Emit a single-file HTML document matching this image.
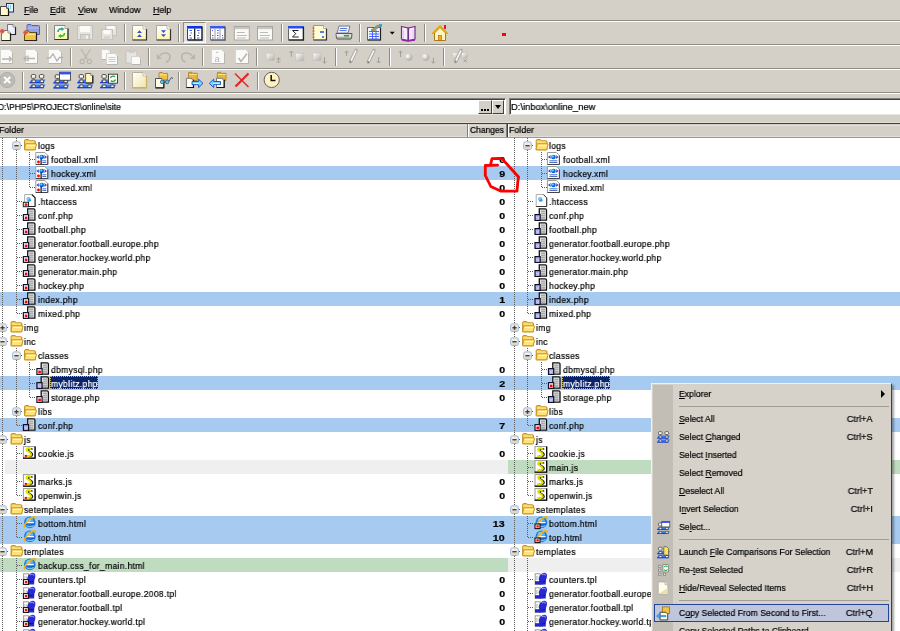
<!DOCTYPE html>
<html><head><meta charset="utf-8"><style>
html,body{margin:0;padding:0;width:900px;height:631px;overflow:hidden;background:#D4D0C8;position:relative;font-family:"Liberation Sans", sans-serif}
.t{position:absolute;white-space:nowrap;line-height:14px;transform-origin:left top;font-family:"Liberation Sans", sans-serif;will-change:transform;-webkit-text-stroke:0.22px currentColor}
u{text-decoration:underline}
svg{overflow:visible}
</style></head><body>
<svg width="0" height="0" style="position:absolute"><defs><symbol id="folder" viewBox="0 0 14 14" overflow="visible"><path d="M2.8 11.8 V2.6 Q2.8 1.6 3.8 1.6 H6.6 Q7.2 1.6 7.6 2.2 L8 2.8 H12.6 Q13.6 2.8 13.6 3.8 V11.8 Z" fill="#F4C848" stroke="#C08A1C" stroke-width="1"/>
<path d="M3.4 4 H12.4" stroke="#FFF0B0" stroke-width="1"/>
<path d="M4.2 5.8 H14.2 Q14.9 5.8 14.7 6.5 L13.3 11.3 Q13.1 11.8 12.5 11.8 H3.2 Q2.6 11.8 2.8 11.2 L3.6 6.4 Q3.7 5.8 4.2 5.8 Z" fill="#FFE27A" stroke="#C8961E" stroke-width="1"/>
<path d="M4.8 7.4 H13.2" stroke="#FFF6C8" stroke-width="1.2"/></symbol><symbol id="minus" viewBox="0 0 9 9" overflow="visible"><rect x="0.5" y="0.5" width="7.6" height="7.6" rx="1.6" fill="#F0EEE6" stroke="#98B2D4"/><rect x="1" y="5" width="6.6" height="2.6" fill="#DCD8CC"/><rect x="2.2" y="3.6" width="4.2" height="1.4" fill="#404040"/></symbol><symbol id="plus" viewBox="0 0 9 9" overflow="visible"><rect x="0.5" y="0.5" width="7.6" height="7.6" rx="1.6" fill="#F0EEE6" stroke="#98B2D4"/><rect x="1" y="5" width="6.6" height="2.6" fill="#DCD8CC"/><rect x="2.2" y="3.6" width="4.2" height="1.4" fill="#404040"/><rect x="3.6" y="2.2" width="1.4" height="4.2" fill="#404040"/></symbol><symbol id="xmlL" viewBox="0 0 14 14" overflow="visible"><path d="M0.5 0.5 H9.5 L12.5 3.5 V12.5 H0.5 Z" fill="#fff" stroke="#9A9A9A"/><path d="M12.5 3.5 V12.5 H0.5" fill="none" stroke="#444"/>
<path d="M3.8 3.6 L2 4.9 L3.8 6.2 M9 3.6 L10.8 4.9 L9 6.2" fill="none" stroke="#2A40E0" stroke-width="1.1"/>
<circle cx="6.5" cy="5" r="2.3" fill="#1060E0"/><circle cx="6" cy="4.4" r="1.1" fill="#40E0E8"/>
<rect x="5.2" y="6.5" width="1.2" height="6" fill="#111"/>
<rect x="7" y="8.3" width="4" height="1" fill="#5070C0"/><rect x="7" y="10" width="4" height="1" fill="#5070C0"/>
<circle cx="3.2" cy="10" r="1.4" fill="#F00"/></symbol><symbol id="xmlR" viewBox="0 0 14 14" overflow="visible"><path d="M0.5 0.5 H9.5 L12.5 3.5 V12.5 H0.5 Z" fill="#fff" stroke="#9A9A9A"/><path d="M12.5 3.5 V12.5 H0.5" fill="none" stroke="#444"/>
<path d="M3.8 3.6 L2 4.9 L3.8 6.2 M9 3.6 L10.8 4.9 L9 6.2" fill="none" stroke="#2A40E0" stroke-width="1.1"/>
<circle cx="6.5" cy="5" r="2.3" fill="#1060E0"/><circle cx="6" cy="4.4" r="1.1" fill="#40E0E8"/>
<rect x="2.5" y="8.3" width="8" height="1" fill="#5070C0"/><rect x="2.5" y="10" width="8" height="1" fill="#5070C0"/></symbol><symbol id="htL" viewBox="0 0 14 14" overflow="visible"><path d="M2.8 0.5 H10 L13.3 3.8 V12.5 H2.8 Z" fill="#fff" stroke="#B0B0B0"/><path d="M10 0.5 L13.3 3.8 V12.5 H7" fill="none" stroke="#222" stroke-width="1.1"/>
<path d="M4.5 4.5 Q6 2 8 3.5 L9.5 6.5 Q8 8.5 6 7.5 Z" fill="#3C9CE8"/><circle cx="6.2" cy="4.5" r="1.3" fill="#8FD0FF"/>
<rect x="1.5" y="8.3" width="5.2" height="4.4" fill="#E8F4F0" stroke="#222" stroke-width="1"/><rect x="3" y="9.4" width="2.6" height="2.4" fill="#F00"/></symbol><symbol id="htR" viewBox="0 0 14 14" overflow="visible"><path d="M2.8 0.5 H10 L13.3 3.8 V12.5 H2.8 Z" fill="#fff" stroke="#B0B0B0"/><path d="M10 0.5 L13.3 3.8 V12.5 H2.8" fill="none" stroke="#333" stroke-width="1"/>
<path d="M4.5 4.5 Q6 2 8 3.5 L9.5 6.5 Q8 8.5 6 7.5 Z" fill="#3C9CE8"/><circle cx="6.2" cy="4.5" r="1.3" fill="#8FD0FF"/></symbol><symbol id="phpL" viewBox="0 0 14 14" overflow="visible"><path d="M5.9 0.8 H11.8 Q13.1 0.8 13.1 2.1 V12.2 H5.9 Z" fill="#F6F6F6" stroke="#111" stroke-width="1.3"/>
<rect x="7.3" y="2.6" width="4.4" height="1.1" fill="#8A8A8A"/><rect x="7.3" y="4.6" width="4.4" height="1.1" fill="#8A8A8A"/><rect x="7.3" y="6.6" width="4.4" height="1.1" fill="#8A8A8A"/><rect x="7.3" y="8.6" width="4.4" height="1.1" fill="#8A8A8A"/><rect x="7.3" y="10.4" width="4.4" height="1" fill="#8A8A8A"/><rect x="1.6" y="6.6" width="5.2" height="5.8" fill="#F4F8F8" stroke="#101830" stroke-width="1.2"/><rect x="3" y="8.6" width="2.6" height="2.6" fill="#F00"/></symbol><symbol id="phpR" viewBox="0 0 14 14" overflow="visible"><path d="M5.9 0.8 H11.8 Q13.1 0.8 13.1 2.1 V12.2 H5.9 Z" fill="#F6F6F6" stroke="#111" stroke-width="1.3"/>
<rect x="7.3" y="2.6" width="4.4" height="1.1" fill="#8A8A8A"/><rect x="7.3" y="4.6" width="4.4" height="1.1" fill="#8A8A8A"/><rect x="7.3" y="6.6" width="4.4" height="1.1" fill="#8A8A8A"/><rect x="7.3" y="8.6" width="4.4" height="1.1" fill="#8A8A8A"/><rect x="7.3" y="10.4" width="4.4" height="1" fill="#8A8A8A"/><rect x="1.6" y="6.6" width="5.2" height="5.8" fill="#A8ACF0" stroke="#101020" stroke-width="1.2"/><path d="M3 8.5 L4 10.5 L3 12 M5.5 8.5 L4.5 10.5 L5.5 12" stroke="#E0E4FF" stroke-width="0.6" fill="none"/></symbol><symbol id="jsL" viewBox="0 0 14 14" overflow="visible"><rect x="1.6" y="0.6" width="11.6" height="11.8" fill="#fff" stroke="#9A9A9A" stroke-width="1"/><path d="M1.2 12.2 H13.3 V0.4" fill="none" stroke="#000" stroke-width="1.3"/>
<path d="M10.8 3.4 C 9.8 2.2, 6.6 2.2, 6.6 4.1 C 6.6 6, 10.8 5.9, 10.8 8.4 C 10.8 10.8, 7 11, 5.8 9.8" fill="none" stroke="#1A1A1A" stroke-width="1.3"/>
<path d="M9 3 C 8 1.8, 4.6 1.8, 4.6 3.8 C 4.6 5.8, 9 5.6, 9 8.2 C 9 10.6, 5 10.8, 3.8 9.6" fill="none" stroke="#E0E000" stroke-width="1.9"/><rect x="2.9" y="8.9" width="2.2" height="2" fill="#F00"/></symbol><symbol id="jsR" viewBox="0 0 14 14" overflow="visible"><rect x="1.6" y="0.6" width="11.6" height="11.8" fill="#fff" stroke="#9A9A9A" stroke-width="1"/><path d="M1.2 12.2 H13.3 V0.4" fill="none" stroke="#000" stroke-width="1.3"/>
<path d="M10.8 3.4 C 9.8 2.2, 6.6 2.2, 6.6 4.1 C 6.6 6, 10.8 5.9, 10.8 8.4 C 10.8 10.8, 7 11, 5.8 9.8" fill="none" stroke="#1A1A1A" stroke-width="1.3"/>
<path d="M9 3 C 8 1.8, 4.6 1.8, 4.6 3.8 C 4.6 5.8, 9 5.6, 9 8.2 C 9 10.6, 5 10.8, 3.8 9.6" fill="none" stroke="#E0E000" stroke-width="1.9"/></symbol><symbol id="html" viewBox="0 0 14 14" overflow="visible"><circle cx="8" cy="6.4" r="5.8" fill="#1C7CE0"/><circle cx="7.8" cy="5.2" r="3.8" fill="#4CB4F8"/><circle cx="7" cy="4" r="1.8" fill="#A8E0FF"/>
<rect x="4.6" y="6" width="7.6" height="1.5" fill="#F4FAFF"/><rect x="4.6" y="7.5" width="8" height="1.2" fill="#0A50B0"/><path d="M4.8 9.5 C 6 11, 9.5 11.2, 12 9.6" stroke="#8ED0FF" stroke-width="1" fill="none"/>
<path d="M3 11.5 C 1.5 9.5, 6.5 2.5, 11.8 0.9 C 13.6 0.4, 13.8 1.6, 13 2.8" fill="none" stroke="#F0B020" stroke-width="1.7"/></symbol><symbol id="htmlL" viewBox="0 0 14 14" overflow="visible"><circle cx="8" cy="6.4" r="5.8" fill="#1C7CE0"/><circle cx="7.8" cy="5.2" r="3.8" fill="#4CB4F8"/><circle cx="7" cy="4" r="1.8" fill="#A8E0FF"/>
<rect x="4.6" y="6" width="7.6" height="1.5" fill="#F4FAFF"/><rect x="4.6" y="7.5" width="8" height="1.2" fill="#0A50B0"/><path d="M4.8 9.5 C 6 11, 9.5 11.2, 12 9.6" stroke="#8ED0FF" stroke-width="1" fill="none"/>
<path d="M3 11.5 C 1.5 9.5, 6.5 2.5, 11.8 0.9 C 13.6 0.4, 13.8 1.6, 13 2.8" fill="none" stroke="#F0B020" stroke-width="1.7"/></symbol><symbol id="htmlR" viewBox="0 0 14 14" overflow="visible"><circle cx="8" cy="6.4" r="5.8" fill="#1C7CE0"/><circle cx="7.8" cy="5.2" r="3.8" fill="#4CB4F8"/><circle cx="7" cy="4" r="1.8" fill="#A8E0FF"/>
<rect x="4.6" y="6" width="7.6" height="1.5" fill="#F4FAFF"/><rect x="4.6" y="7.5" width="8" height="1.2" fill="#0A50B0"/><path d="M4.8 9.5 C 6 11, 9.5 11.2, 12 9.6" stroke="#8ED0FF" stroke-width="1" fill="none"/>
<path d="M3 11.5 C 1.5 9.5, 6.5 2.5, 11.8 0.9 C 13.6 0.4, 13.8 1.6, 13 2.8" fill="none" stroke="#F0B020" stroke-width="1.7"/><rect x="1.6" y="8" width="5" height="4.6" fill="#F8F8F8" stroke="#111" stroke-width="1.1"/><rect x="3" y="9.3" width="2.4" height="2.2" fill="#F00"/></symbol><symbol id="tplL" viewBox="0 0 14 14" overflow="visible"><rect x="1.8" y="1.8" width="5" height="10.6" fill="#fff" stroke="#9A9A9A"/><path d="M3 4 v4 M4.5 4 v4" stroke="#C8C8C8"/>
<path d="M5.8 12.4 V9 C 5 7, 5.4 3.8, 8 2 C 10 0.2, 13.6 0.4, 13.6 3.5 C 13.6 6, 12.4 7.5, 12.4 9.5 V12.4 Z" fill="#2828D4"/><path d="M8.5 3 C 9.5 1.8, 11.8 2, 12.2 3.6" stroke="#8A8AF8" stroke-width="1.2" fill="none"/><path d="M7 9 C 8 10, 11 10, 12 9" stroke="#0A0A90" stroke-width="1" fill="none"/><rect x="1.6" y="7.6" width="5" height="4.8" fill="#fff" stroke="#111" stroke-width="1.1"/><rect x="3" y="9" width="2.4" height="2.2" fill="#F00"/></symbol><symbol id="tplR" viewBox="0 0 14 14" overflow="visible"><rect x="1.8" y="1.8" width="5" height="10.6" fill="#fff" stroke="#9A9A9A"/><path d="M3 4 v4 M4.5 4 v4" stroke="#C8C8C8"/>
<path d="M5.8 12.4 V9 C 5 7, 5.4 3.8, 8 2 C 10 0.2, 13.6 0.4, 13.6 3.5 C 13.6 6, 12.4 7.5, 12.4 9.5 V12.4 Z" fill="#2828D4"/><path d="M8.5 3 C 9.5 1.8, 11.8 2, 12.2 3.6" stroke="#8A8AF8" stroke-width="1.2" fill="none"/><path d="M7 9 C 8 10, 11 10, 12 9" stroke="#0A0A90" stroke-width="1" fill="none"/><rect x="1.6" y="9.2" width="8.4" height="3.2" fill="#2424D0"/></symbol><symbol id="phpSelL" viewBox="0 0 14 14" overflow="visible"><path d="M5.9 0.8 H11.8 Q13.1 0.8 13.1 2.1 V12.2 H5.9 Z" fill="#F6F6F6" stroke="#111" stroke-width="1.3"/>
<rect x="7.3" y="2.6" width="4.4" height="1.1" fill="#8A8A8A"/><rect x="7.3" y="4.6" width="4.4" height="1.1" fill="#8A8A8A"/><rect x="7.3" y="6.6" width="4.4" height="1.1" fill="#8A8A8A"/><rect x="7.3" y="8.6" width="4.4" height="1.1" fill="#8A8A8A"/><rect x="7.3" y="10.4" width="4.4" height="1" fill="#8A8A8A"/><rect x="1.6" y="6.6" width="5.2" height="5.8" fill="#A8ACF0" stroke="#101020" stroke-width="1.2"/><path d="M3 8.5 L4 10.5 L3 12 M5.5 8.5 L4.5 10.5 L5.5 12" stroke="#E0E4FF" stroke-width="0.6" fill="none"/></symbol><symbol id="phpSelR" viewBox="0 0 14 14" overflow="visible"><path d="M5.9 0.8 H11.8 Q13.1 0.8 13.1 2.1 V12.2 H5.9 Z" fill="#F6F6F6" stroke="#111" stroke-width="1.3"/>
<rect x="7.3" y="2.6" width="4.4" height="1.1" fill="#8A8A8A"/><rect x="7.3" y="4.6" width="4.4" height="1.1" fill="#8A8A8A"/><rect x="7.3" y="6.6" width="4.4" height="1.1" fill="#8A8A8A"/><rect x="7.3" y="8.6" width="4.4" height="1.1" fill="#8A8A8A"/><rect x="7.3" y="10.4" width="4.4" height="1" fill="#8A8A8A"/><rect x="1.6" y="6.6" width="5.2" height="5.8" fill="#F4F8F8" stroke="#101830" stroke-width="1.2"/><rect x="3" y="8.6" width="2.6" height="2.6" fill="#F00"/></symbol></defs></svg>
<div style="position:absolute;left:0px;top:20px;width:900px;height:1px;background:#8E8C86;"></div>
<div style="position:absolute;left:0px;top:21px;width:900px;height:1px;background:#FFFFFF;"></div>
<div style="position:absolute;left:0px;top:44px;width:900px;height:1px;background:#8E8C86;"></div>
<div style="position:absolute;left:0px;top:45px;width:900px;height:1px;background:#FFFFFF;"></div>
<div style="position:absolute;left:0px;top:68px;width:900px;height:1px;background:#8E8C86;"></div>
<div style="position:absolute;left:0px;top:69px;width:900px;height:1px;background:#FFFFFF;"></div>
<div style="position:absolute;left:0px;top:92px;width:900px;height:1px;background:#8E8C86;"></div>
<div style="position:absolute;left:0px;top:93px;width:900px;height:1px;background:#FFFFFF;"></div>
<div class="t" style="left:24px;top:3px;font-size:9.5px;color:#000;font-weight:normal;transform:scaleX(0.93);"><u>F</u>ile</div>
<div class="t" style="left:50px;top:3px;font-size:9.5px;color:#000;font-weight:normal;transform:scaleX(0.93);"><u>E</u>dit</div>
<div class="t" style="left:78px;top:3px;font-size:9.5px;color:#000;font-weight:normal;transform:scaleX(0.93);"><u>V</u>iew</div>
<div class="t" style="left:109px;top:3px;font-size:9.5px;color:#000;font-weight:normal;transform:scaleX(0.93);">Window</div>
<div class="t" style="left:153px;top:3px;font-size:9.5px;color:#000;font-weight:normal;transform:scaleX(0.93);"><u>H</u>elp</div>
<div style="position:absolute;left:46px;top:24px;width:1px;height:18px;background:#8E8C86;"></div>
<div style="position:absolute;left:47px;top:24px;width:1px;height:18px;background:#FFFFFF;"></div>
<div style="position:absolute;left:124px;top:24px;width:1px;height:18px;background:#8E8C86;"></div>
<div style="position:absolute;left:125px;top:24px;width:1px;height:18px;background:#FFFFFF;"></div>
<div style="position:absolute;left:178px;top:24px;width:1px;height:18px;background:#8E8C86;"></div>
<div style="position:absolute;left:179px;top:24px;width:1px;height:18px;background:#FFFFFF;"></div>
<div style="position:absolute;left:281px;top:24px;width:1px;height:18px;background:#8E8C86;"></div>
<div style="position:absolute;left:282px;top:24px;width:1px;height:18px;background:#FFFFFF;"></div>
<div style="position:absolute;left:359px;top:24px;width:1px;height:18px;background:#8E8C86;"></div>
<div style="position:absolute;left:360px;top:24px;width:1px;height:18px;background:#FFFFFF;"></div>
<div style="position:absolute;left:424px;top:24px;width:1px;height:18px;background:#8E8C86;"></div>
<div style="position:absolute;left:425px;top:24px;width:1px;height:18px;background:#FFFFFF;"></div>
<div style="position:absolute;left:183px;top:22px;width:23px;height:21px;background:#E6E4E0;box-sizing:border-box;border-top:1px solid #8E8C86;border-left:1px solid #8E8C86;border-bottom:1px solid #fff;border-right:1px solid #fff;"></div>
<div style="position:absolute;left:502px;top:33px;width:4px;height:3px;background:#FF0000;"></div>
<div style="position:absolute;left:70px;top:48px;width:1px;height:18px;background:#8E8C86;"></div>
<div style="position:absolute;left:71px;top:48px;width:1px;height:18px;background:#FFFFFF;"></div>
<div style="position:absolute;left:148px;top:48px;width:1px;height:18px;background:#8E8C86;"></div>
<div style="position:absolute;left:149px;top:48px;width:1px;height:18px;background:#FFFFFF;"></div>
<div style="position:absolute;left:202px;top:48px;width:1px;height:18px;background:#8E8C86;"></div>
<div style="position:absolute;left:203px;top:48px;width:1px;height:18px;background:#FFFFFF;"></div>
<div style="position:absolute;left:256px;top:48px;width:1px;height:18px;background:#8E8C86;"></div>
<div style="position:absolute;left:257px;top:48px;width:1px;height:18px;background:#FFFFFF;"></div>
<div style="position:absolute;left:335px;top:48px;width:1px;height:18px;background:#8E8C86;"></div>
<div style="position:absolute;left:336px;top:48px;width:1px;height:18px;background:#FFFFFF;"></div>
<div style="position:absolute;left:389px;top:48px;width:1px;height:18px;background:#8E8C86;"></div>
<div style="position:absolute;left:390px;top:48px;width:1px;height:18px;background:#FFFFFF;"></div>
<div style="position:absolute;left:443px;top:48px;width:1px;height:18px;background:#8E8C86;"></div>
<div style="position:absolute;left:444px;top:48px;width:1px;height:18px;background:#FFFFFF;"></div>
<div style="position:absolute;left:22px;top:72px;width:1px;height:18px;background:#8E8C86;"></div>
<div style="position:absolute;left:23px;top:72px;width:1px;height:18px;background:#FFFFFF;"></div>
<div style="position:absolute;left:124px;top:72px;width:1px;height:18px;background:#8E8C86;"></div>
<div style="position:absolute;left:125px;top:72px;width:1px;height:18px;background:#FFFFFF;"></div>
<div style="position:absolute;left:178px;top:72px;width:1px;height:18px;background:#8E8C86;"></div>
<div style="position:absolute;left:179px;top:72px;width:1px;height:18px;background:#FFFFFF;"></div>
<div style="position:absolute;left:257px;top:72px;width:1px;height:18px;background:#8E8C86;"></div>
<div style="position:absolute;left:258px;top:72px;width:1px;height:18px;background:#FFFFFF;"></div>
<svg style="position:absolute;left:0;top:0" width="900" height="92" viewBox="0 0 900 92"><rect x="6.5" y="3.5" width="7" height="8.5" fill="#DDF4FF" stroke="#1A2A9A"/><path d="M8 6 h1 M10 6 h1 M8 8 h1 M10 8h1" stroke="#20B0D0"/><path d="M0.5 6.5 H6.5 L8.5 8.5 V15.5 H0.5 Z" fill="#FFF8C8" stroke="#444" stroke-width="1"/><path d="M8.5 8.5 V15.5 H0.5" fill="none" stroke="#111" stroke-width="1.2"/><path d="M6.5 6.5 V8.5 H8.5" fill="#fff" stroke="#444" stroke-width="0.8"/><path d="M7.5 24.5 H13.0 L15.5 27.0 V34.5 H7.5 Z" fill="#F0F0FF" stroke="#777" stroke-width="1"/><path d="M15.5 27.0 V34.5 H7.5" fill="none" stroke="#222" stroke-width="1.2"/><path d="M13.0 24.5 V27.0 H15.5" fill="#fff" stroke="#777" stroke-width="0.8"/><path d="M1.5 30.5 H8.0 L10.5 33.0 V40.5 H1.5 Z" fill="#FFFFE0" stroke="#777" stroke-width="1"/><path d="M10.5 33.0 V40.5 H1.5" fill="none" stroke="#222" stroke-width="1.2"/><path d="M8.0 30.5 V33.0 H10.5" fill="#fff" stroke="#777" stroke-width="0.8"/><circle cx="2.2" cy="31.2" r="2.2" fill="#F06A58"/><path d="M0 31.2 h4.4 M2.2 29 v4.4" stroke="#E84030" stroke-width="0.8"/><path d="M27 25.5 Q27 24.5 28 24.5 H31 L32 25.5 H38.5 Q39.5 25.5 39.5 26.5 V34.5 H27 Z" fill="#9AA2E6" stroke="#5A62B0"/><path d="M27.5 28 H39" stroke="#B8C0F8"/><path d="M24.5 32 Q24.5 31 25.5 31 H28.5 L29.5 32.5 H36.5 V40.5 H24.5 Z" fill="#F2C440" stroke="#6A5018"/><path d="M25 34.5 H36" stroke="#FFE890" stroke-width="1.2"/><path d="M36.5 32.5 V40.5 H24.5" fill="none" stroke="#222" stroke-width="1.2"/><circle cx="25.5" cy="32.5" r="2.2" fill="#F06A58"/><path d="M23.3 32.5 h4.4 M25.5 30.3 v4.4" stroke="#E84030" stroke-width="0.8"/><defs><linearGradient id="gy" x1="0" y1="0" x2="0" y2="1"><stop offset="0" stop-color="#FFFFFF"/><stop offset="1" stop-color="#FFF6A8"/></linearGradient></defs><path d="M54.5 25.5 H65 L68 28.5 V39.5 H54.5 Z" fill="url(#gy)" stroke="#888" stroke-width="1"/><path d="M68 28.5 V39.5 H54.5" fill="none" stroke="#333" stroke-width="1.2"/><path d="M65 25.5 V28.5 H68" fill="#fff" stroke="#888" stroke-width="0.8"/><path d="M58 32 C 58 29.5, 60 28.5, 62 29" fill="none" stroke="#20A0B8" stroke-width="1.6"/><path d="M61.5 27 L64.5 29 L61.5 31 Z" fill="#20B070"/><path d="M64.5 33 C 64.5 35.5, 62.5 36.5, 60.5 36" fill="none" stroke="#30C030" stroke-width="1.6"/><path d="M61 34 L58 36 L61 38 Z" fill="#30C030"/><rect x="77.5" y="25.5" width="15" height="14" fill="#E6E4DE" stroke="#C4C2BC"/><rect x="80" y="26" width="10" height="6" fill="#FBFBFA"/><rect x="80.5" y="34.5" width="9" height="5" fill="#D6D4CE" stroke="#C4C2BC"/><rect x="86" y="35.5" width="2" height="3" fill="#F4F4F2"/><rect x="105.5" y="25.5" width="11" height="10" fill="#E6E4DE" stroke="#C4C2BC"/><rect x="107.5" y="26" width="7" height="4" fill="#FBFBFA"/><rect x="101.5" y="29.5" width="11" height="10" fill="#E6E4DE" stroke="#C4C2BC"/><rect x="103.5" y="30" width="7" height="4" fill="#FBFBFA"/><rect x="104" y="36" width="6" height="3.5" fill="#D6D4CE"/><path d="M132.5 25.5 H143.0 L146.5 29.0 V40 H132.5 Z" fill="url(#gy)" stroke="#A8A8A0" stroke-width="1"/><path d="M146.5 29.0 V40 H132.5" fill="none" stroke="#333" stroke-width="1.2"/><path d="M143.0 25.5 V29.0 H146.5" fill="#fff" stroke="#A8A8A0" stroke-width="0.8"/><path d="M137 33 L139.5 30.2 L142 33 Z M137 37 L139.5 34.2 L142 37 Z" fill="#3050E8"/><path d="M156.5 25.5 H167.0 L170.5 29.0 V40 H156.5 Z" fill="url(#gy)" stroke="#A8A8A0" stroke-width="1"/><path d="M170.5 29.0 V40 H156.5" fill="none" stroke="#333" stroke-width="1.2"/><path d="M167.0 25.5 V29.0 H170.5" fill="#fff" stroke="#A8A8A0" stroke-width="0.8"/><path d="M161 30.2 L163.5 33 L166 30.2 Z M161 34.2 L163.5 37 L166 34.2 Z" fill="#3050E8"/><rect x="187" y="26" width="15" height="14" fill="#fff"/><rect x="187" y="26" width="15" height="2.6" fill="#1030E8"/><path d="M202 26.5 V40 H187.5" fill="none" stroke="#1A1A1A" stroke-width="1.4"/><rect x="194" y="28.5" width="1.3" height="11.5" fill="#222"/><path d="M187.5 28.5 V40" stroke="#444"/><path d="M189.5 30.5 h2.5 M190.5 33 h1.5 M189.5 35.5 h1.5 M189.5 38 h2.5 M197 30.5 h2.5 M198 33 h1.5 M197 35.5 h2 M197 38 h2.5" stroke="#3A5CFF" stroke-width="1"/><rect x="210" y="26" width="15" height="14" fill="#fff"/><rect x="210" y="26" width="15" height="2.5" fill="#3858F0"/><path d="M225 26.5 V40 H210.5" fill="none" stroke="#555" stroke-width="1.4"/><path d="M210.5 28.5 V40" stroke="#777"/><rect x="214.5" y="28.5" width="1" height="11" fill="#999"/><rect x="219.5" y="28.5" width="1" height="11" fill="#999"/><path d="M212 30.5 h1 M212 35.5 h1.5 M212 38 h1.5 M217 30.5 h1.5 M217 33 h1.5 M217 35.5 h1.5 M217 38 h1.5 M222 35.5 h1 M222 38 h1.5" stroke="#3A5CFF" stroke-width="1"/><rect x="234.3" y="26.5" width="15" height="13.5" fill="#FAFAF8" stroke="#A8A6A0"/><rect x="234.8" y="27" width="14" height="2.2" fill="#C8C6C0"/><path d="M236.8 32.5 h8 M236.8 35.5 h10 M236.8 38 h9" stroke="#BCBAB4"/><rect x="257.5" y="26.5" width="15" height="13.5" fill="#FAFAF8" stroke="#A8A6A0"/><rect x="258" y="27" width="14" height="2.2" fill="#C8C6C0"/><path d="M260 32.5 h8 M260 35.5 h10 M260 38 h9" stroke="#BCBAB4"/><rect x="288" y="26" width="15.4" height="14" fill="#fff"/><rect x="288" y="26" width="15.4" height="2.5" fill="#2A4CF0"/><path d="M303.4 26.5 V40 H288.5" fill="none" stroke="#222" stroke-width="1.4"/><path d="M288.5 28.5 V40" stroke="#666"/><path d="M298.5 30.5 H292.5 L295.8 33.6 L292.5 37 H298.8" fill="none" stroke="#222" stroke-width="1"/><path d="M313.5 25.5 H323.5 L326.5 28.5 V40 H313.5 Z" fill="#FFFCD8" stroke="#999" stroke-width="1"/><path d="M326.5 28.5 V40 H313.5" fill="none" stroke="#333" stroke-width="1.2"/><path d="M323.5 25.5 V28.5 H326.5" fill="#fff" stroke="#999" stroke-width="0.8"/><path d="M312.5 28 h2 M312.5 31 h2 M312.5 34 h2 M312.5 37 h2" stroke="#C87820" stroke-width="1.4"/><path d="M320 32 h4 M322 37 h2" stroke="#2A50E0" stroke-width="1.4"/><path d="M339 26 L350 26 L348 33 L337 33 Z" fill="#EEF2FF" stroke="#7A7A90"/><path d="M340 28.5 h7 M339.5 30.5 h7" stroke="#5A7AE0"/><path d="M336 33.5 H352 L351.5 38.5 H336.5 Z" fill="#D8D8D8" stroke="#5A5A5A"/><rect x="337" y="37.5" width="14" height="2.6" fill="#8A8A8A"/><rect x="344" y="35" width="5" height="1.6" fill="#2AB02A"/><path d="M336.5 35 H343" stroke="#fff"/><rect x="367.5" y="27.5" width="13" height="12.5" fill="#F4F6FF" stroke="#666"/><path d="M380.5 28 V40 H368" fill="none" stroke="#222" stroke-width="1.2"/><path d="M369 31.5 h10 M369 34 h10 M369 36.5 h10 M369 39 h10 M372.5 30 v9 M376 30 v9" stroke="#3A5CF0" stroke-width="0.9"/><path d="M371 30 L378 25 L380 26.5 L373 31.5 Z" fill="#9AA070" stroke="#6A7040" stroke-width="0.6"/><rect x="379" y="24" width="3" height="3" fill="#30A8E8"/><path d="M389.7 31.8 H394.7 L392.2 34.6 Z" fill="#000"/><path d="M401.5 26.5 L408 28 V40.5 L401.5 39 Z" fill="#F4ECF8" stroke="#7A2A90" stroke-width="1.2"/><path d="M415 26.5 L408.5 28 V40.5 L415 39 Z" fill="#F4ECF8" stroke="#7A2A90" stroke-width="1.2"/><path d="M402 40 L408 41 L415 40" stroke="#8A2AA0" stroke-width="1.4" fill="none"/><path d="M403.5 30 v8 M413 30 v8" stroke="#D8C8E8"/><path d="M434.5 33 L440 27.5 L445.5 33 V40.5 H434.5 Z" fill="#FFF4C0" stroke="#B07A10"/><path d="M432.3 33.8 L440 26 L447.7 33.8" fill="none" stroke="#E0A818" stroke-width="1.8"/><rect x="438.5" y="35.5" width="3" height="5" fill="#F0A820" stroke="#A06010" stroke-width="0.6"/><rect x="444" y="25" width="2" height="4" fill="#D02030"/><defs><linearGradient id="gb" x1="0" y1="0" x2="1" y2="1"><stop offset="0" stop-color="#FFFFFF"/><stop offset="1" stop-color="#B0AEA8"/></linearGradient><radialGradient id="gball" cx="0.35" cy="0.35" r="0.7"><stop offset="0" stop-color="#FFFFFF"/><stop offset="1" stop-color="#A8A6A0"/></radialGradient></defs><path d="M0.5 49.5 H9.5 L12.5 52.5 V63.5 H0.5 Z" fill="#FAFAF9" stroke="#D6D4CE" stroke-width="1"/><path d="M12.5 52.5 V63.5 H0.5" fill="none" stroke="#B8B6B0" stroke-width="1"/><path d="M2 59 H11 M9 56.5 L11.5 59 L9 61.5" fill="none" stroke="#B6B4AE" stroke-width="1.3"/><path d="M25.5 49.5 H34.5 L37.5 52.5 V63.5 H25.5 Z" fill="#FAFAF9" stroke="#D6D4CE" stroke-width="1"/><path d="M37.5 52.5 V63.5 H25.5" fill="none" stroke="#B8B6B0" stroke-width="1"/><path d="M24 58.5 H35 M26.5 56 L24 58.5 L26.5 61 M28 55.5 V61.5" fill="none" stroke="#B6B4AE" stroke-width="1.3"/><path d="M48.5 49.5 H58.5 L61.5 52.5 V63.5 H48.5 Z" fill="#FAFAF9" stroke="#D6D4CE" stroke-width="1"/><path d="M61.5 52.5 V63.5 H48.5" fill="none" stroke="#B8B6B0" stroke-width="1"/><path d="M46.7 58 H50 L53 54 L57 61 L59.5 57.5 H63.3" fill="none" stroke="#B6B4AE" stroke-width="1.3"/><path d="M81 49 L87.5 59.5 M90.5 49 L84 59.5" stroke="#B6B4AE" stroke-width="1.2"/><circle cx="82.2" cy="61.5" r="2.1" fill="none" stroke="#B6B4AE" stroke-width="1.1"/><circle cx="89.4" cy="61.5" r="2.1" fill="none" stroke="#B6B4AE" stroke-width="1.1"/><path d="M101.5 49.5 H108.0 L110.5 52.0 V59.5 H101.5 Z" fill="#FAFAF9" stroke="#D6D4CE" stroke-width="1"/><path d="M110.5 52.0 V59.5 H101.5" fill="none" stroke="#B8B6B0" stroke-width="1"/><path d="M106.5 53.5 H115.0 L117.5 56.0 V64.5 H106.5 Z" fill="#FAFAF9" stroke="#D6D4CE" stroke-width="1"/><path d="M117.5 56.0 V64.5 H106.5" fill="none" stroke="#B8B6B0" stroke-width="1"/><path d="M108.5 57.5 h7 M108.5 59.5 h7 M108.5 61.5 h7" stroke="#CFCDC8"/><rect x="126" y="51" width="11" height="12" fill="#E6E4DE" stroke="#C4C2BC"/><rect x="129" y="50" width="5" height="2.5" fill="#D0CEC8" stroke="#C4C2BC" stroke-width="0.6"/><path d="M131.5 56.5 H138.5 L140.5 58.5 V64.5 H131.5 Z" fill="#FAFAF9" stroke="#D6D4CE" stroke-width="1"/><path d="M140.5 58.5 V64.5 H131.5" fill="none" stroke="#B8B6B0" stroke-width="1"/><path d="M159.5 55.5 C 163 52, 170 52, 170 57 C 170 60, 167.5 62, 166 62" fill="none" stroke="#B6B4AE" stroke-width="1.6"/><path d="M156.5 54 L157 59.5 L162 58.5 Z" fill="#B6B4AE"/><path d="M192.2 55.5 C 188.7 52, 181.7 52, 181.7 57 C 181.7 60, 184.2 62, 185.7 62" fill="none" stroke="#B6B4AE" stroke-width="1.6"/><path d="M195.2 54 L194.7 59.5 L189.7 58.5 Z" fill="#B6B4AE"/><path d="M211.5 49.5 H221.5 L224.5 52.5 V63.5 H211.5 Z" fill="#FAFAF9" stroke="#D6D4CE" stroke-width="1"/><path d="M224.5 52.5 V63.5 H211.5" fill="none" stroke="#B8B6B0" stroke-width="1"/><text x="214.5" y="61.5" font-family="Liberation Sans" font-size="9.5" fill="#B6B4AE">a</text><path d="M216 53 l1.2 -1.2 l1.2 1.2" stroke="#B6B4AE" fill="none" stroke-width="0.8"/><path d="M235.5 49.5 H245.5 L248.5 52.5 V63.5 H235.5 Z" fill="#FAFAF9" stroke="#D6D4CE" stroke-width="1"/><path d="M248.5 52.5 V63.5 H235.5" fill="none" stroke="#B8B6B0" stroke-width="1"/><path d="M238.5 58 L241 61.5 L247 53.5" fill="none" stroke="#B6B4AE" stroke-width="1.5"/><rect x="266" y="53.2" width="8.399999999999977" height="7.199999999999996" rx="1" fill="url(#gb)" stroke="#C0BEB8" stroke-width="0.6"/><path d="M276.5 59 h4 M278.5 57 v4 M276.5 62 h4" stroke="#A09E98" stroke-width="0.9"/><path d="M291.3 56.6 V51 M289.5 52.8 L291.3 51 L293.1 52.8" fill="none" stroke="#A09E98" stroke-width="1"/><rect x="295.6" y="53.2" width="8.299999999999955" height="7.799999999999997" rx="1" fill="url(#gb)" stroke="#C0BEB8" stroke-width="0.6"/><rect x="312.8" y="53" width="8.300000000000011" height="7.5" rx="1" fill="url(#gb)" stroke="#C0BEB8" stroke-width="0.6"/><path d="M324.5 57 V63.2 M322.7 61.400000000000006 L324.5 63.2 L326.3 61.400000000000006" fill="none" stroke="#A09E98" stroke-width="1"/><path d="M346.5 56 V51 M344.7 52.8 L346.5 51 L348.3 52.8" fill="none" stroke="#A09E98" stroke-width="1"/><path d="M356.1 50.4 L350.6 61.6" stroke="#A8A6A0" stroke-width="3.4" stroke-linecap="round"/><path d="M356.1 50.4 L350.6 61.6" stroke="#F8F8F6" stroke-width="1.6"/><circle cx="350.6" cy="61.6" r="1" fill="#8A8882"/><path d="M373.9 50.4 L368.3 62" stroke="#A8A6A0" stroke-width="3.4" stroke-linecap="round"/><path d="M373.9 50.4 L368.3 62" stroke="#F8F8F6" stroke-width="1.6"/><circle cx="368.3" cy="62" r="1" fill="#8A8882"/><path d="M378.6 57 V63 M376.8 61.2 L378.6 63 L380.40000000000003 61.2" fill="none" stroke="#A09E98" stroke-width="1"/><path d="M400.5 57 V51 M398.7 52.8 L400.5 51 L402.3 52.8" fill="none" stroke="#A09E98" stroke-width="1"/><circle cx="408.7" cy="57.1" r="3.7" fill="url(#gball)"/><circle cx="425.6" cy="57.1" r="3.7" fill="url(#gball)"/><path d="M433.3 57.7 V63.2 M431.5 61.400000000000006 L433.3 63.2 L435.1 61.400000000000006" fill="none" stroke="#A09E98" stroke-width="1"/><rect x="452.5" y="52.5" width="7.5" height="6.0" rx="1" fill="url(#gb)" stroke="#C0BEB8" stroke-width="0.6"/><rect x="461.5" y="52.5" width="6.0" height="5.5" rx="1" fill="url(#gb)" stroke="#C0BEB8" stroke-width="0.6"/><path d="M461 50.4 L455.6 61.6" stroke="#A8A6A0" stroke-width="3.4" stroke-linecap="round"/><path d="M461 50.4 L455.6 61.6" stroke="#F8F8F6" stroke-width="1.6"/><circle cx="455.6" cy="61.6" r="1" fill="#8A8882"/><path d="M463.5 59 l3.5 3.5 M467 59 l-3.5 3.5" stroke="#A09E98" stroke-width="0.9"/><circle cx="7.2" cy="80" r="7.6" fill="#BEBCB8" stroke="#A8A6A0" stroke-width="0.8"/><path d="M4.2 77 L10.2 83 M10.2 77 L4.2 83" stroke="#FFFFFF" stroke-width="1.9"/><rect x="31.299999999999997" y="74.60000000000001" width="4.4" height="3.6" rx="1" fill="#FAFAF4" stroke="#3A3A3A" stroke-width="0.9"/><rect x="39.4" y="74.60000000000001" width="4.4" height="3.6" rx="1" fill="#FAFAF4" stroke="#3A3A3A" stroke-width="0.9"/><path d="M31.2 79.4 H45.4 L43.6 83.2 H29.4 Z" fill="#3A7CF8"/><path d="M29.4 82.7 H43.8" stroke="#1428D8" stroke-width="1"/><rect x="32.0" y="79.9" width="3.4" height="2.6" rx="1" fill="#FAFAF4" stroke="#3A3A3A" stroke-width="0.9"/><rect x="40.1" y="79.9" width="3.4" height="2.6" rx="1" fill="#FAFAF4" stroke="#3A3A3A" stroke-width="0.9"/><path d="M31.2 84.4 H45.4 L43.6 88.2 H29.4 Z" fill="#3A7CF8"/><path d="M29.4 87.7 H43.8" stroke="#1428D8" stroke-width="1"/><rect x="32.0" y="84.9" width="3.4" height="2.6" rx="1" fill="#FAFAF4" stroke="#3A3A3A" stroke-width="0.9"/><rect x="40.1" y="84.9" width="3.4" height="2.6" rx="1" fill="#FAFAF4" stroke="#3A3A3A" stroke-width="0.9"/><rect x="55.199999999999996" y="74.8" width="4.4" height="3.6" rx="1" fill="#FAFAF4" stroke="#3A3A3A" stroke-width="0.9"/><path d="M55.099999999999994 79.6 H69.3 L67.5 83.39999999999999 H53.3 Z" fill="#3A7CF8"/><path d="M53.3 82.89999999999999 H67.7" stroke="#1428D8" stroke-width="1"/><rect x="55.9" y="80.1" width="3.4" height="2.6" rx="1" fill="#FAFAF4" stroke="#3A3A3A" stroke-width="0.9"/><rect x="64.0" y="80.1" width="3.4" height="2.6" rx="1" fill="#FAFAF4" stroke="#3A3A3A" stroke-width="0.9"/><path d="M55.099999999999994 84.6 H69.3 L67.5 88.39999999999999 H53.3 Z" fill="#3A7CF8"/><path d="M53.3 87.89999999999999 H67.7" stroke="#1428D8" stroke-width="1"/><rect x="55.9" y="85.1" width="3.4" height="2.6" rx="1" fill="#FAFAF4" stroke="#3A3A3A" stroke-width="0.9"/><rect x="64.0" y="85.1" width="3.4" height="2.6" rx="1" fill="#FAFAF4" stroke="#3A3A3A" stroke-width="0.9"/><rect x="59.4" y="72.2" width="11.2" height="8" fill="#fff" stroke="#333" stroke-width="0.8"/><rect x="59.4" y="72.2" width="11.2" height="2.2" fill="#2A4CF0"/><rect x="79.10000000000001" y="74.60000000000001" width="4.4" height="3.6" rx="1" fill="#FAFAF4" stroke="#3A3A3A" stroke-width="0.9"/><path d="M79.0 79.4 H93.2 L91.4 83.2 H77.2 Z" fill="#3A7CF8"/><path d="M77.2 82.7 H91.60000000000001" stroke="#1428D8" stroke-width="1"/><rect x="79.8" y="79.9" width="3.4" height="2.6" rx="1" fill="#FAFAF4" stroke="#3A3A3A" stroke-width="0.9"/><path d="M79.0 84.4 H93.2 L91.4 88.2 H77.2 Z" fill="#3A7CF8"/><path d="M77.2 87.7 H91.60000000000001" stroke="#1428D8" stroke-width="1"/><rect x="79.8" y="84.9" width="3.4" height="2.6" rx="1" fill="#FAFAF4" stroke="#3A3A3A" stroke-width="0.9"/><rect x="87.89999999999999" y="84.9" width="3.4" height="2.6" rx="1" fill="#FAFAF4" stroke="#3A3A3A" stroke-width="0.9"/><path d="M85.6 73.5 H90.8 L92.8 75.5 V83 H85.6 Z" fill="#FFF6C0" stroke="#666" stroke-width="1"/><path d="M92.8 75.5 V83 H85.6" fill="none" stroke="#222" stroke-width="1.2"/><path d="M90.8 73.5 V75.5 H92.8" fill="#fff" stroke="#666" stroke-width="0.8"/><rect x="101.9" y="74.60000000000001" width="4.4" height="3.6" rx="1" fill="#FAFAF4" stroke="#3A3A3A" stroke-width="0.9"/><path d="M101.8 79.4 H116 L114.2 83.2 H100 Z" fill="#3A7CF8"/><path d="M100 82.7 H114.4" stroke="#1428D8" stroke-width="1"/><rect x="102.6" y="79.9" width="3.4" height="2.6" rx="1" fill="#FAFAF4" stroke="#3A3A3A" stroke-width="0.9"/><path d="M101.8 84.4 H116 L114.2 88.2 H100 Z" fill="#3A7CF8"/><path d="M100 87.7 H114.4" stroke="#1428D8" stroke-width="1"/><rect x="102.6" y="84.9" width="3.4" height="2.6" rx="1" fill="#FAFAF4" stroke="#3A3A3A" stroke-width="0.9"/><rect x="110.69999999999999" y="84.9" width="3.4" height="2.6" rx="1" fill="#FAFAF4" stroke="#3A3A3A" stroke-width="0.9"/><rect x="108.5" y="74.2" width="9" height="9" fill="#fff" stroke="#333" stroke-width="0.9"/><path d="M110.5 78 C 111 76, 114 75.5, 115 77 M115.5 79.5 C 115 81.5, 112 82, 111 80.5" fill="none" stroke="#20B040" stroke-width="1.4"/><defs><linearGradient id="gc" x1="0" y1="0" x2="1" y2="1"><stop offset="0" stop-color="#FFFFFF"/><stop offset="1" stop-color="#F0E4A8"/></linearGradient></defs><path d="M132.5 72.5 H143.0 L146.5 76.0 V87.8 H132.5 Z" fill="url(#gc)" stroke="#B8B098" stroke-width="1"/><path d="M146.5 76.0 V87.8 H132.5" fill="none" stroke="#C8B060" stroke-width="1.2"/><path d="M143.0 72.5 V76.0 H146.5" fill="#fff" stroke="#B8B098" stroke-width="0.8"/><path d="M159 73.3 Q159 72.5 159.8 72.5 H162.3 L163.2 73.4 H167.6 V80 H159 Z" fill="#F0C040" stroke="#A07010" stroke-width="0.7"/><path d="M159.5 74.8 H167" stroke="#FFE890" stroke-width="1"/><path d="M155.5 78.5 H161.8 L163.8 80.5 V87.8 H155.5 Z" fill="#FFFDE8" stroke="#555" stroke-width="1"/><path d="M163.8 80.5 V87.8 H155.5" fill="none" stroke="#222" stroke-width="1.2"/><path d="M161.8 78.5 V80.5 H163.8" fill="#fff" stroke="#555" stroke-width="0.8"/><circle cx="162.2" cy="81.9" r="1.8" fill="#58C8F0" stroke="#205080" stroke-width="0.7"/><circle cx="167.2" cy="81.9" r="1.8" fill="#58C8F0" stroke="#205080" stroke-width="0.7"/><path d="M169 81 L171.5 77.5 L173 78.5" fill="none" stroke="#333" stroke-width="0.8"/><path d="M164 82 h1.5" stroke="#333" stroke-width="0.7"/><path d="M188.5 73 Q188.5 72.3 189.3 72.3 H192 L193 73.3 H197.2 V80.5 H188.5 Z" fill="#F0B830" stroke="#A07010" stroke-width="0.7"/><path d="M189 74.5 H197" stroke="#FFE080" stroke-width="1"/><rect x="189" y="72.5" width="3" height="1.2" fill="#90B040"/><path d="M186.4 78.3 H192.0 L193.5 79.8 V87.5 H186.4 Z" fill="#FFFFF4" stroke="#777" stroke-width="1"/><path d="M193.5 79.8 V87.5 H186.4" fill="none" stroke="#111" stroke-width="1.2"/><path d="M192.0 78.3 V79.8 H193.5" fill="#fff" stroke="#777" stroke-width="0.8"/><path d="M192 81.5 H198.6 V79.2 L203 83.4 L198.6 87.6 V84.6 H192 Z" fill="#70D8FA" stroke="#1848D0" stroke-width="0.9" stroke-linejoin="round"/><path d="M193 83.6 H199" stroke="#E0F8FF" stroke-width="0.9"/><path d="M217.3 73 Q217.3 72.3 218.1 72.3 H220.8 L221.8 73.3 H226 V80.5 H217.3 Z" fill="#F0B830" stroke="#A07010" stroke-width="0.7"/><path d="M217.8 74.5 H225.8" stroke="#FFE080" stroke-width="1"/><rect x="217.8" y="72.5" width="3" height="1.2" fill="#90B040"/><path d="M216.5 78.3 H222.7 L224.2 79.8 V87.5 H216.5 Z" fill="#FFFFF4" stroke="#777" stroke-width="1"/><path d="M224.2 79.8 V87.5 H216.5" fill="none" stroke="#111" stroke-width="1.2"/><path d="M222.7 78.3 V79.8 H224.2" fill="#fff" stroke="#777" stroke-width="0.8"/><path d="M220.5 81.5 H213.7 V79.2 L209.3 83.4 L213.7 87.6 V84.6 H220.5 Z" fill="#70D8FA" stroke="#1848D0" stroke-width="0.9" stroke-linejoin="round"/><path d="M213 83.6 H219.5" stroke="#E0F8FF" stroke-width="0.9"/><path d="M235 73.5 L248.5 87" stroke="#E02828" stroke-width="1.5"/><path d="M248.5 73.5 L235.5 86.5" stroke="#E82020" stroke-width="2.1"/><circle cx="271.7" cy="79.9" r="7.6" fill="#FFF2C0" stroke="#606060" stroke-width="1"/><path d="M271.2 75 V80.4 H275.5" fill="none" stroke="#111" stroke-width="1.5"/></svg>
<div style="position:absolute;left:-3px;top:98px;width:509px;height:17px;box-sizing:border-box;background:#fff;border-top:1px solid #808080;border-left:1px solid #808080;border-bottom:1px solid #E8E6E0;border-right:1px solid #fff;"><div style="position:absolute;left:0;top:0;right:0;bottom:0;border-top:1px solid #404040;border-left:1px solid #404040;"></div></div>
<div class="t" style="left:-2px;top:100px;font-size:9.5px;color:#000;font-weight:normal;transform:scaleX(0.905);">D:\PHP5\PROJECTS\online\site</div>
<div style="position:absolute;left:478px;top:100px;width:14px;height:14px;background:#D4D0C8;box-sizing:border-box;border-right:1px solid #404040;border-bottom:1px solid #404040;border-left:1px solid #fff;border-top:1px solid #fff;"></div>
<div style="position:absolute;left:492px;top:100px;width:12px;height:14px;background:#D4D0C8;box-sizing:border-box;border-right:1px solid #404040;border-bottom:1px solid #404040;border-left:1px solid #fff;border-top:1px solid #fff;"></div>
<div style="position:absolute;left:481px;top:109px;width:2px;height:2px;background:#000;box-shadow:3px 0 #000,6px 0 #000"></div>
<div style="position:absolute;left:495px;top:105px;width:0;height:0;border-left:3.5px solid transparent;border-right:3.5px solid transparent;border-top:4px solid #000"></div>
<div style="position:absolute;left:509px;top:98px;width:400px;height:17px;box-sizing:border-box;background:#fff;border-top:1px solid #808080;border-left:1px solid #808080;border-bottom:1px solid #E8E6E0;border-right:1px solid #fff;"><div style="position:absolute;left:0;top:0;right:0;bottom:0;border-top:1px solid #404040;border-left:1px solid #404040;"></div></div>
<div class="t" style="left:511px;top:100px;font-size:9.5px;color:#000;font-weight:normal;transform:scaleX(0.985);">D:\inbox\online_new</div>
<div style="position:absolute;left:0px;top:122px;width:900px;height:1px;background:#E2DED8;"></div>
<div style="position:absolute;left:0px;top:123px;width:900px;height:1px;background:#404040;"></div>
<div style="position:absolute;left:0px;top:124px;width:900px;height:13px;background:#D4D0C8;"></div>
<div style="position:absolute;left:0px;top:125px;width:900px;height:1px;background:#E0DED6;"></div>
<div style="position:absolute;left:0px;top:136px;width:900px;height:1px;background:#E0DED8;"></div>
<div style="position:absolute;left:0px;top:137px;width:900px;height:1px;background:#9C988F;"></div>
<div style="position:absolute;left:467px;top:124px;width:1px;height:13px;background:#808080;"></div>
<div style="position:absolute;left:468px;top:124px;width:1px;height:13px;background:#fff;"></div>
<div style="position:absolute;left:506px;top:124px;width:1px;height:13px;background:#808080;"></div>
<div style="position:absolute;left:507px;top:124px;width:1px;height:13px;background:#404040;"></div>
<div style="position:absolute;left:508px;top:124px;width:1px;height:13px;background:#fff;"></div>
<div class="t" style="left:-1px;top:123px;font-size:9.5px;color:#000;font-weight:normal;transform:scaleX(0.93);">Folder</div>
<div class="t" style="left:469.5px;top:123px;font-size:9.5px;color:#000;font-weight:normal;transform:scaleX(0.89);">Changes</div>
<div class="t" style="left:509px;top:123px;font-size:9.5px;color:#000;font-weight:normal;transform:scaleX(0.93);">Folder</div>
<div style="position:absolute;left:0px;top:138px;width:900px;height:493px;background:#FFFFFF;"></div>
<div style="position:absolute;left:0px;top:166px;width:900px;height:14px;background:#A6CAF0;"></div>
<div style="position:absolute;left:0px;top:292px;width:900px;height:14px;background:#A6CAF0;"></div>
<div style="position:absolute;left:0px;top:376px;width:900px;height:14px;background:#A6CAF0;"></div>
<div style="position:absolute;left:0px;top:418px;width:900px;height:14px;background:#A6CAF0;"></div>
<div style="position:absolute;left:5px;top:460px;width:503px;height:14px;background:#EFEFEF;"></div>
<div style="position:absolute;left:508px;top:460px;width:392px;height:14px;background:#C0DCC0;"></div>
<div style="position:absolute;left:0px;top:516px;width:900px;height:14px;background:#A6CAF0;"></div>
<div style="position:absolute;left:0px;top:530px;width:900px;height:14px;background:#A6CAF0;"></div>
<div style="position:absolute;left:0px;top:558px;width:508px;height:14px;background:#C0DCC0;"></div>
<div style="position:absolute;left:508px;top:558px;width:392px;height:14px;background:#EFEFEF;"></div>
<svg style="position:absolute;left:0;top:0" width="900" height="631" viewBox="0 0 900 631"><line x1="2.5" y1="138" x2="2.5" y2="152" stroke="#5A5A5A" stroke-dasharray="1 1"/><line x1="16.5" y1="138" x2="16.5" y2="152" stroke="#5A5A5A" stroke-dasharray="1 1"/><line x1="17" y1="145.5" x2="23" y2="145.5" stroke="#5A5A5A" stroke-dasharray="1 1"/><use href="#minus" x="12.2" y="141.4" width="9" height="9"/><use href="#folder" x="21.8" y="138" width="14" height="14"/><line x1="2.5" y1="152" x2="2.5" y2="166" stroke="#5A5A5A" stroke-dasharray="1 1"/><line x1="16.5" y1="152" x2="16.5" y2="166" stroke="#5A5A5A" stroke-dasharray="1 1"/><line x1="29.5" y1="152" x2="29.5" y2="166" stroke="#5A5A5A" stroke-dasharray="1 1"/><line x1="30" y1="159.5" x2="36" y2="159.5" stroke="#5A5A5A" stroke-dasharray="1 1"/><use href="#xmlL" x="35.3" y="152" width="14" height="14"/><line x1="2.5" y1="166" x2="2.5" y2="180" stroke="#5A5A5A" stroke-dasharray="1 1"/><line x1="16.5" y1="166" x2="16.5" y2="180" stroke="#5A5A5A" stroke-dasharray="1 1"/><line x1="29.5" y1="166" x2="29.5" y2="180" stroke="#5A5A5A" stroke-dasharray="1 1"/><line x1="30" y1="173.5" x2="36" y2="173.5" stroke="#5A5A5A" stroke-dasharray="1 1"/><use href="#xmlL" x="35.3" y="166" width="14" height="14"/><line x1="2.5" y1="180" x2="2.5" y2="194" stroke="#5A5A5A" stroke-dasharray="1 1"/><line x1="16.5" y1="180" x2="16.5" y2="194" stroke="#5A5A5A" stroke-dasharray="1 1"/><line x1="29.5" y1="180" x2="29.5" y2="188" stroke="#5A5A5A" stroke-dasharray="1 1"/><line x1="30" y1="187.5" x2="36" y2="187.5" stroke="#5A5A5A" stroke-dasharray="1 1"/><use href="#xmlL" x="35.3" y="180" width="14" height="14"/><line x1="2.5" y1="194" x2="2.5" y2="208" stroke="#5A5A5A" stroke-dasharray="1 1"/><line x1="16.5" y1="194" x2="16.5" y2="208" stroke="#5A5A5A" stroke-dasharray="1 1"/><line x1="17" y1="201.5" x2="23" y2="201.5" stroke="#5A5A5A" stroke-dasharray="1 1"/><use href="#htL" x="21.8" y="194" width="14" height="14"/><line x1="2.5" y1="208" x2="2.5" y2="222" stroke="#5A5A5A" stroke-dasharray="1 1"/><line x1="16.5" y1="208" x2="16.5" y2="222" stroke="#5A5A5A" stroke-dasharray="1 1"/><line x1="17" y1="215.5" x2="23" y2="215.5" stroke="#5A5A5A" stroke-dasharray="1 1"/><use href="#phpL" x="21.8" y="208" width="14" height="14"/><line x1="2.5" y1="222" x2="2.5" y2="236" stroke="#5A5A5A" stroke-dasharray="1 1"/><line x1="16.5" y1="222" x2="16.5" y2="236" stroke="#5A5A5A" stroke-dasharray="1 1"/><line x1="17" y1="229.5" x2="23" y2="229.5" stroke="#5A5A5A" stroke-dasharray="1 1"/><use href="#phpL" x="21.8" y="222" width="14" height="14"/><line x1="2.5" y1="236" x2="2.5" y2="250" stroke="#5A5A5A" stroke-dasharray="1 1"/><line x1="16.5" y1="236" x2="16.5" y2="250" stroke="#5A5A5A" stroke-dasharray="1 1"/><line x1="17" y1="243.5" x2="23" y2="243.5" stroke="#5A5A5A" stroke-dasharray="1 1"/><use href="#phpL" x="21.8" y="236" width="14" height="14"/><line x1="2.5" y1="250" x2="2.5" y2="264" stroke="#5A5A5A" stroke-dasharray="1 1"/><line x1="16.5" y1="250" x2="16.5" y2="264" stroke="#5A5A5A" stroke-dasharray="1 1"/><line x1="17" y1="257.5" x2="23" y2="257.5" stroke="#5A5A5A" stroke-dasharray="1 1"/><use href="#phpL" x="21.8" y="250" width="14" height="14"/><line x1="2.5" y1="264" x2="2.5" y2="278" stroke="#5A5A5A" stroke-dasharray="1 1"/><line x1="16.5" y1="264" x2="16.5" y2="278" stroke="#5A5A5A" stroke-dasharray="1 1"/><line x1="17" y1="271.5" x2="23" y2="271.5" stroke="#5A5A5A" stroke-dasharray="1 1"/><use href="#phpL" x="21.8" y="264" width="14" height="14"/><line x1="2.5" y1="278" x2="2.5" y2="292" stroke="#5A5A5A" stroke-dasharray="1 1"/><line x1="16.5" y1="278" x2="16.5" y2="292" stroke="#5A5A5A" stroke-dasharray="1 1"/><line x1="17" y1="285.5" x2="23" y2="285.5" stroke="#5A5A5A" stroke-dasharray="1 1"/><use href="#phpL" x="21.8" y="278" width="14" height="14"/><line x1="2.5" y1="292" x2="2.5" y2="306" stroke="#5A5A5A" stroke-dasharray="1 1"/><line x1="16.5" y1="292" x2="16.5" y2="306" stroke="#5A5A5A" stroke-dasharray="1 1"/><line x1="17" y1="299.5" x2="23" y2="299.5" stroke="#5A5A5A" stroke-dasharray="1 1"/><use href="#phpL" x="21.8" y="292" width="14" height="14"/><line x1="2.5" y1="306" x2="2.5" y2="320" stroke="#5A5A5A" stroke-dasharray="1 1"/><line x1="16.5" y1="306" x2="16.5" y2="314" stroke="#5A5A5A" stroke-dasharray="1 1"/><line x1="17" y1="313.5" x2="23" y2="313.5" stroke="#5A5A5A" stroke-dasharray="1 1"/><use href="#phpL" x="21.8" y="306" width="14" height="14"/><line x1="2.5" y1="320" x2="2.5" y2="334" stroke="#5A5A5A" stroke-dasharray="1 1"/><line x1="3" y1="327.5" x2="9" y2="327.5" stroke="#5A5A5A" stroke-dasharray="1 1"/><use href="#plus" x="-1.7999999999999998" y="323.4" width="9" height="9"/><use href="#folder" x="8.3" y="320" width="14" height="14"/><line x1="2.5" y1="334" x2="2.5" y2="348" stroke="#5A5A5A" stroke-dasharray="1 1"/><line x1="3" y1="341.5" x2="9" y2="341.5" stroke="#5A5A5A" stroke-dasharray="1 1"/><use href="#minus" x="-1.7999999999999998" y="337.4" width="9" height="9"/><use href="#folder" x="8.3" y="334" width="14" height="14"/><line x1="2.5" y1="348" x2="2.5" y2="362" stroke="#5A5A5A" stroke-dasharray="1 1"/><line x1="16.5" y1="348" x2="16.5" y2="362" stroke="#5A5A5A" stroke-dasharray="1 1"/><line x1="17" y1="355.5" x2="23" y2="355.5" stroke="#5A5A5A" stroke-dasharray="1 1"/><use href="#minus" x="12.2" y="351.4" width="9" height="9"/><use href="#folder" x="21.8" y="348" width="14" height="14"/><line x1="2.5" y1="362" x2="2.5" y2="376" stroke="#5A5A5A" stroke-dasharray="1 1"/><line x1="16.5" y1="362" x2="16.5" y2="376" stroke="#5A5A5A" stroke-dasharray="1 1"/><line x1="29.5" y1="362" x2="29.5" y2="376" stroke="#5A5A5A" stroke-dasharray="1 1"/><line x1="30" y1="369.5" x2="36" y2="369.5" stroke="#5A5A5A" stroke-dasharray="1 1"/><use href="#phpL" x="35.3" y="362" width="14" height="14"/><line x1="2.5" y1="376" x2="2.5" y2="390" stroke="#5A5A5A" stroke-dasharray="1 1"/><line x1="16.5" y1="376" x2="16.5" y2="390" stroke="#5A5A5A" stroke-dasharray="1 1"/><line x1="29.5" y1="376" x2="29.5" y2="390" stroke="#5A5A5A" stroke-dasharray="1 1"/><line x1="30" y1="383.5" x2="36" y2="383.5" stroke="#5A5A5A" stroke-dasharray="1 1"/><use href="#phpSelL" x="35.3" y="376" width="14" height="14"/><line x1="2.5" y1="390" x2="2.5" y2="404" stroke="#5A5A5A" stroke-dasharray="1 1"/><line x1="16.5" y1="390" x2="16.5" y2="404" stroke="#5A5A5A" stroke-dasharray="1 1"/><line x1="29.5" y1="390" x2="29.5" y2="398" stroke="#5A5A5A" stroke-dasharray="1 1"/><line x1="30" y1="397.5" x2="36" y2="397.5" stroke="#5A5A5A" stroke-dasharray="1 1"/><use href="#phpL" x="35.3" y="390" width="14" height="14"/><line x1="2.5" y1="404" x2="2.5" y2="418" stroke="#5A5A5A" stroke-dasharray="1 1"/><line x1="16.5" y1="404" x2="16.5" y2="418" stroke="#5A5A5A" stroke-dasharray="1 1"/><line x1="17" y1="411.5" x2="23" y2="411.5" stroke="#5A5A5A" stroke-dasharray="1 1"/><use href="#plus" x="12.2" y="407.4" width="9" height="9"/><use href="#folder" x="21.8" y="404" width="14" height="14"/><line x1="2.5" y1="418" x2="2.5" y2="432" stroke="#5A5A5A" stroke-dasharray="1 1"/><line x1="16.5" y1="418" x2="16.5" y2="426" stroke="#5A5A5A" stroke-dasharray="1 1"/><line x1="17" y1="425.5" x2="23" y2="425.5" stroke="#5A5A5A" stroke-dasharray="1 1"/><use href="#phpSelL" x="21.8" y="418" width="14" height="14"/><line x1="2.5" y1="432" x2="2.5" y2="446" stroke="#5A5A5A" stroke-dasharray="1 1"/><line x1="3" y1="439.5" x2="9" y2="439.5" stroke="#5A5A5A" stroke-dasharray="1 1"/><use href="#minus" x="-1.7999999999999998" y="435.4" width="9" height="9"/><use href="#folder" x="8.3" y="432" width="14" height="14"/><line x1="2.5" y1="446" x2="2.5" y2="460" stroke="#5A5A5A" stroke-dasharray="1 1"/><line x1="16.5" y1="446" x2="16.5" y2="460" stroke="#5A5A5A" stroke-dasharray="1 1"/><line x1="17" y1="453.5" x2="23" y2="453.5" stroke="#5A5A5A" stroke-dasharray="1 1"/><use href="#jsL" x="21.8" y="446" width="14" height="14"/><line x1="2.5" y1="460" x2="2.5" y2="474" stroke="#5A5A5A" stroke-dasharray="1 1"/><line x1="16.5" y1="460" x2="16.5" y2="474" stroke="#5A5A5A" stroke-dasharray="1 1"/><line x1="2.5" y1="474" x2="2.5" y2="488" stroke="#5A5A5A" stroke-dasharray="1 1"/><line x1="16.5" y1="474" x2="16.5" y2="488" stroke="#5A5A5A" stroke-dasharray="1 1"/><line x1="17" y1="481.5" x2="23" y2="481.5" stroke="#5A5A5A" stroke-dasharray="1 1"/><use href="#jsL" x="21.8" y="474" width="14" height="14"/><line x1="2.5" y1="488" x2="2.5" y2="502" stroke="#5A5A5A" stroke-dasharray="1 1"/><line x1="16.5" y1="488" x2="16.5" y2="496" stroke="#5A5A5A" stroke-dasharray="1 1"/><line x1="17" y1="495.5" x2="23" y2="495.5" stroke="#5A5A5A" stroke-dasharray="1 1"/><use href="#jsL" x="21.8" y="488" width="14" height="14"/><line x1="2.5" y1="502" x2="2.5" y2="516" stroke="#5A5A5A" stroke-dasharray="1 1"/><line x1="3" y1="509.5" x2="9" y2="509.5" stroke="#5A5A5A" stroke-dasharray="1 1"/><use href="#minus" x="-1.7999999999999998" y="505.4" width="9" height="9"/><use href="#folder" x="8.3" y="502" width="14" height="14"/><line x1="2.5" y1="516" x2="2.5" y2="530" stroke="#5A5A5A" stroke-dasharray="1 1"/><line x1="16.5" y1="516" x2="16.5" y2="530" stroke="#5A5A5A" stroke-dasharray="1 1"/><line x1="17" y1="523.5" x2="23" y2="523.5" stroke="#5A5A5A" stroke-dasharray="1 1"/><use href="#htmlL" x="21.8" y="516" width="14" height="14"/><line x1="2.5" y1="530" x2="2.5" y2="544" stroke="#5A5A5A" stroke-dasharray="1 1"/><line x1="16.5" y1="530" x2="16.5" y2="538" stroke="#5A5A5A" stroke-dasharray="1 1"/><line x1="17" y1="537.5" x2="23" y2="537.5" stroke="#5A5A5A" stroke-dasharray="1 1"/><use href="#htmlL" x="21.8" y="530" width="14" height="14"/><line x1="2.5" y1="544" x2="2.5" y2="558" stroke="#5A5A5A" stroke-dasharray="1 1"/><line x1="3" y1="551.5" x2="9" y2="551.5" stroke="#5A5A5A" stroke-dasharray="1 1"/><use href="#minus" x="-1.7999999999999998" y="547.4" width="9" height="9"/><use href="#folder" x="8.3" y="544" width="14" height="14"/><line x1="2.5" y1="558" x2="2.5" y2="572" stroke="#5A5A5A" stroke-dasharray="1 1"/><line x1="16.5" y1="558" x2="16.5" y2="572" stroke="#5A5A5A" stroke-dasharray="1 1"/><line x1="17" y1="565.5" x2="23" y2="565.5" stroke="#5A5A5A" stroke-dasharray="1 1"/><use href="#htmlL" x="21.8" y="558" width="14" height="14"/><line x1="2.5" y1="572" x2="2.5" y2="586" stroke="#5A5A5A" stroke-dasharray="1 1"/><line x1="16.5" y1="572" x2="16.5" y2="586" stroke="#5A5A5A" stroke-dasharray="1 1"/><line x1="17" y1="579.5" x2="23" y2="579.5" stroke="#5A5A5A" stroke-dasharray="1 1"/><use href="#tplL" x="21.8" y="572" width="14" height="14"/><line x1="2.5" y1="586" x2="2.5" y2="600" stroke="#5A5A5A" stroke-dasharray="1 1"/><line x1="16.5" y1="586" x2="16.5" y2="600" stroke="#5A5A5A" stroke-dasharray="1 1"/><line x1="17" y1="593.5" x2="23" y2="593.5" stroke="#5A5A5A" stroke-dasharray="1 1"/><use href="#tplL" x="21.8" y="586" width="14" height="14"/><line x1="2.5" y1="600" x2="2.5" y2="614" stroke="#5A5A5A" stroke-dasharray="1 1"/><line x1="16.5" y1="600" x2="16.5" y2="614" stroke="#5A5A5A" stroke-dasharray="1 1"/><line x1="17" y1="607.5" x2="23" y2="607.5" stroke="#5A5A5A" stroke-dasharray="1 1"/><use href="#tplL" x="21.8" y="600" width="14" height="14"/><line x1="2.5" y1="614" x2="2.5" y2="628" stroke="#5A5A5A" stroke-dasharray="1 1"/><line x1="16.5" y1="614" x2="16.5" y2="628" stroke="#5A5A5A" stroke-dasharray="1 1"/><line x1="17" y1="621.5" x2="23" y2="621.5" stroke="#5A5A5A" stroke-dasharray="1 1"/><use href="#tplL" x="21.8" y="614" width="14" height="14"/><line x1="2.5" y1="628" x2="2.5" y2="642" stroke="#5A5A5A" stroke-dasharray="1 1"/><line x1="16.5" y1="628" x2="16.5" y2="642" stroke="#5A5A5A" stroke-dasharray="1 1"/><line x1="17" y1="635.5" x2="23" y2="635.5" stroke="#5A5A5A" stroke-dasharray="1 1"/><use href="#tplL" x="21.8" y="628" width="14" height="14"/><line x1="514.5" y1="138" x2="514.5" y2="152" stroke="#5A5A5A" stroke-dasharray="1 1"/><line x1="527.5" y1="138" x2="527.5" y2="152" stroke="#5A5A5A" stroke-dasharray="1 1"/><line x1="528" y1="145.5" x2="534" y2="145.5" stroke="#5A5A5A" stroke-dasharray="1 1"/><use href="#minus" x="523.2" y="141.4" width="9" height="9"/><use href="#folder" x="533.4" y="138" width="14" height="14"/><line x1="514.5" y1="152" x2="514.5" y2="166" stroke="#5A5A5A" stroke-dasharray="1 1"/><line x1="527.5" y1="152" x2="527.5" y2="166" stroke="#5A5A5A" stroke-dasharray="1 1"/><line x1="541.5" y1="152" x2="541.5" y2="166" stroke="#5A5A5A" stroke-dasharray="1 1"/><line x1="542" y1="159.5" x2="548" y2="159.5" stroke="#5A5A5A" stroke-dasharray="1 1"/><use href="#xmlR" x="546.9" y="152" width="14" height="14"/><line x1="514.5" y1="166" x2="514.5" y2="180" stroke="#5A5A5A" stroke-dasharray="1 1"/><line x1="527.5" y1="166" x2="527.5" y2="180" stroke="#5A5A5A" stroke-dasharray="1 1"/><line x1="541.5" y1="166" x2="541.5" y2="180" stroke="#5A5A5A" stroke-dasharray="1 1"/><line x1="542" y1="173.5" x2="548" y2="173.5" stroke="#5A5A5A" stroke-dasharray="1 1"/><use href="#xmlR" x="546.9" y="166" width="14" height="14"/><line x1="514.5" y1="180" x2="514.5" y2="194" stroke="#5A5A5A" stroke-dasharray="1 1"/><line x1="527.5" y1="180" x2="527.5" y2="194" stroke="#5A5A5A" stroke-dasharray="1 1"/><line x1="541.5" y1="180" x2="541.5" y2="188" stroke="#5A5A5A" stroke-dasharray="1 1"/><line x1="542" y1="187.5" x2="548" y2="187.5" stroke="#5A5A5A" stroke-dasharray="1 1"/><use href="#xmlR" x="546.9" y="180" width="14" height="14"/><line x1="514.5" y1="194" x2="514.5" y2="208" stroke="#5A5A5A" stroke-dasharray="1 1"/><line x1="527.5" y1="194" x2="527.5" y2="208" stroke="#5A5A5A" stroke-dasharray="1 1"/><line x1="528" y1="201.5" x2="534" y2="201.5" stroke="#5A5A5A" stroke-dasharray="1 1"/><use href="#htR" x="533.4" y="194" width="14" height="14"/><line x1="514.5" y1="208" x2="514.5" y2="222" stroke="#5A5A5A" stroke-dasharray="1 1"/><line x1="527.5" y1="208" x2="527.5" y2="222" stroke="#5A5A5A" stroke-dasharray="1 1"/><line x1="528" y1="215.5" x2="534" y2="215.5" stroke="#5A5A5A" stroke-dasharray="1 1"/><use href="#phpR" x="533.4" y="208" width="14" height="14"/><line x1="514.5" y1="222" x2="514.5" y2="236" stroke="#5A5A5A" stroke-dasharray="1 1"/><line x1="527.5" y1="222" x2="527.5" y2="236" stroke="#5A5A5A" stroke-dasharray="1 1"/><line x1="528" y1="229.5" x2="534" y2="229.5" stroke="#5A5A5A" stroke-dasharray="1 1"/><use href="#phpR" x="533.4" y="222" width="14" height="14"/><line x1="514.5" y1="236" x2="514.5" y2="250" stroke="#5A5A5A" stroke-dasharray="1 1"/><line x1="527.5" y1="236" x2="527.5" y2="250" stroke="#5A5A5A" stroke-dasharray="1 1"/><line x1="528" y1="243.5" x2="534" y2="243.5" stroke="#5A5A5A" stroke-dasharray="1 1"/><use href="#phpR" x="533.4" y="236" width="14" height="14"/><line x1="514.5" y1="250" x2="514.5" y2="264" stroke="#5A5A5A" stroke-dasharray="1 1"/><line x1="527.5" y1="250" x2="527.5" y2="264" stroke="#5A5A5A" stroke-dasharray="1 1"/><line x1="528" y1="257.5" x2="534" y2="257.5" stroke="#5A5A5A" stroke-dasharray="1 1"/><use href="#phpR" x="533.4" y="250" width="14" height="14"/><line x1="514.5" y1="264" x2="514.5" y2="278" stroke="#5A5A5A" stroke-dasharray="1 1"/><line x1="527.5" y1="264" x2="527.5" y2="278" stroke="#5A5A5A" stroke-dasharray="1 1"/><line x1="528" y1="271.5" x2="534" y2="271.5" stroke="#5A5A5A" stroke-dasharray="1 1"/><use href="#phpR" x="533.4" y="264" width="14" height="14"/><line x1="514.5" y1="278" x2="514.5" y2="292" stroke="#5A5A5A" stroke-dasharray="1 1"/><line x1="527.5" y1="278" x2="527.5" y2="292" stroke="#5A5A5A" stroke-dasharray="1 1"/><line x1="528" y1="285.5" x2="534" y2="285.5" stroke="#5A5A5A" stroke-dasharray="1 1"/><use href="#phpR" x="533.4" y="278" width="14" height="14"/><line x1="514.5" y1="292" x2="514.5" y2="306" stroke="#5A5A5A" stroke-dasharray="1 1"/><line x1="527.5" y1="292" x2="527.5" y2="306" stroke="#5A5A5A" stroke-dasharray="1 1"/><line x1="528" y1="299.5" x2="534" y2="299.5" stroke="#5A5A5A" stroke-dasharray="1 1"/><use href="#phpR" x="533.4" y="292" width="14" height="14"/><line x1="514.5" y1="306" x2="514.5" y2="320" stroke="#5A5A5A" stroke-dasharray="1 1"/><line x1="527.5" y1="306" x2="527.5" y2="314" stroke="#5A5A5A" stroke-dasharray="1 1"/><line x1="528" y1="313.5" x2="534" y2="313.5" stroke="#5A5A5A" stroke-dasharray="1 1"/><use href="#phpR" x="533.4" y="306" width="14" height="14"/><line x1="514.5" y1="320" x2="514.5" y2="334" stroke="#5A5A5A" stroke-dasharray="1 1"/><line x1="515" y1="327.5" x2="521" y2="327.5" stroke="#5A5A5A" stroke-dasharray="1 1"/><use href="#plus" x="510.2" y="323.4" width="9" height="9"/><use href="#folder" x="519.9" y="320" width="14" height="14"/><line x1="514.5" y1="334" x2="514.5" y2="348" stroke="#5A5A5A" stroke-dasharray="1 1"/><line x1="515" y1="341.5" x2="521" y2="341.5" stroke="#5A5A5A" stroke-dasharray="1 1"/><use href="#minus" x="510.2" y="337.4" width="9" height="9"/><use href="#folder" x="519.9" y="334" width="14" height="14"/><line x1="514.5" y1="348" x2="514.5" y2="362" stroke="#5A5A5A" stroke-dasharray="1 1"/><line x1="527.5" y1="348" x2="527.5" y2="362" stroke="#5A5A5A" stroke-dasharray="1 1"/><line x1="528" y1="355.5" x2="534" y2="355.5" stroke="#5A5A5A" stroke-dasharray="1 1"/><use href="#minus" x="523.2" y="351.4" width="9" height="9"/><use href="#folder" x="533.4" y="348" width="14" height="14"/><line x1="514.5" y1="362" x2="514.5" y2="376" stroke="#5A5A5A" stroke-dasharray="1 1"/><line x1="527.5" y1="362" x2="527.5" y2="376" stroke="#5A5A5A" stroke-dasharray="1 1"/><line x1="541.5" y1="362" x2="541.5" y2="376" stroke="#5A5A5A" stroke-dasharray="1 1"/><line x1="542" y1="369.5" x2="548" y2="369.5" stroke="#5A5A5A" stroke-dasharray="1 1"/><use href="#phpR" x="546.9" y="362" width="14" height="14"/><line x1="514.5" y1="376" x2="514.5" y2="390" stroke="#5A5A5A" stroke-dasharray="1 1"/><line x1="527.5" y1="376" x2="527.5" y2="390" stroke="#5A5A5A" stroke-dasharray="1 1"/><line x1="541.5" y1="376" x2="541.5" y2="390" stroke="#5A5A5A" stroke-dasharray="1 1"/><line x1="542" y1="383.5" x2="548" y2="383.5" stroke="#5A5A5A" stroke-dasharray="1 1"/><use href="#phpSelR" x="546.9" y="376" width="14" height="14"/><line x1="514.5" y1="390" x2="514.5" y2="404" stroke="#5A5A5A" stroke-dasharray="1 1"/><line x1="527.5" y1="390" x2="527.5" y2="404" stroke="#5A5A5A" stroke-dasharray="1 1"/><line x1="541.5" y1="390" x2="541.5" y2="398" stroke="#5A5A5A" stroke-dasharray="1 1"/><line x1="542" y1="397.5" x2="548" y2="397.5" stroke="#5A5A5A" stroke-dasharray="1 1"/><use href="#phpR" x="546.9" y="390" width="14" height="14"/><line x1="514.5" y1="404" x2="514.5" y2="418" stroke="#5A5A5A" stroke-dasharray="1 1"/><line x1="527.5" y1="404" x2="527.5" y2="418" stroke="#5A5A5A" stroke-dasharray="1 1"/><line x1="528" y1="411.5" x2="534" y2="411.5" stroke="#5A5A5A" stroke-dasharray="1 1"/><use href="#plus" x="523.2" y="407.4" width="9" height="9"/><use href="#folder" x="533.4" y="404" width="14" height="14"/><line x1="514.5" y1="418" x2="514.5" y2="432" stroke="#5A5A5A" stroke-dasharray="1 1"/><line x1="527.5" y1="418" x2="527.5" y2="426" stroke="#5A5A5A" stroke-dasharray="1 1"/><line x1="528" y1="425.5" x2="534" y2="425.5" stroke="#5A5A5A" stroke-dasharray="1 1"/><use href="#phpSelR" x="533.4" y="418" width="14" height="14"/><line x1="514.5" y1="432" x2="514.5" y2="446" stroke="#5A5A5A" stroke-dasharray="1 1"/><line x1="515" y1="439.5" x2="521" y2="439.5" stroke="#5A5A5A" stroke-dasharray="1 1"/><use href="#minus" x="510.2" y="435.4" width="9" height="9"/><use href="#folder" x="519.9" y="432" width="14" height="14"/><line x1="514.5" y1="446" x2="514.5" y2="460" stroke="#5A5A5A" stroke-dasharray="1 1"/><line x1="527.5" y1="446" x2="527.5" y2="460" stroke="#5A5A5A" stroke-dasharray="1 1"/><line x1="528" y1="453.5" x2="534" y2="453.5" stroke="#5A5A5A" stroke-dasharray="1 1"/><use href="#jsR" x="533.4" y="446" width="14" height="14"/><line x1="514.5" y1="460" x2="514.5" y2="474" stroke="#5A5A5A" stroke-dasharray="1 1"/><line x1="527.5" y1="460" x2="527.5" y2="474" stroke="#5A5A5A" stroke-dasharray="1 1"/><line x1="528" y1="467.5" x2="534" y2="467.5" stroke="#5A5A5A" stroke-dasharray="1 1"/><use href="#jsR" x="533.4" y="460" width="14" height="14"/><line x1="514.5" y1="474" x2="514.5" y2="488" stroke="#5A5A5A" stroke-dasharray="1 1"/><line x1="527.5" y1="474" x2="527.5" y2="488" stroke="#5A5A5A" stroke-dasharray="1 1"/><line x1="528" y1="481.5" x2="534" y2="481.5" stroke="#5A5A5A" stroke-dasharray="1 1"/><use href="#jsR" x="533.4" y="474" width="14" height="14"/><line x1="514.5" y1="488" x2="514.5" y2="502" stroke="#5A5A5A" stroke-dasharray="1 1"/><line x1="527.5" y1="488" x2="527.5" y2="496" stroke="#5A5A5A" stroke-dasharray="1 1"/><line x1="528" y1="495.5" x2="534" y2="495.5" stroke="#5A5A5A" stroke-dasharray="1 1"/><use href="#jsR" x="533.4" y="488" width="14" height="14"/><line x1="514.5" y1="502" x2="514.5" y2="516" stroke="#5A5A5A" stroke-dasharray="1 1"/><line x1="515" y1="509.5" x2="521" y2="509.5" stroke="#5A5A5A" stroke-dasharray="1 1"/><use href="#minus" x="510.2" y="505.4" width="9" height="9"/><use href="#folder" x="519.9" y="502" width="14" height="14"/><line x1="514.5" y1="516" x2="514.5" y2="530" stroke="#5A5A5A" stroke-dasharray="1 1"/><line x1="527.5" y1="516" x2="527.5" y2="530" stroke="#5A5A5A" stroke-dasharray="1 1"/><line x1="528" y1="523.5" x2="534" y2="523.5" stroke="#5A5A5A" stroke-dasharray="1 1"/><use href="#htmlR" x="533.4" y="516" width="14" height="14"/><line x1="514.5" y1="530" x2="514.5" y2="544" stroke="#5A5A5A" stroke-dasharray="1 1"/><line x1="527.5" y1="530" x2="527.5" y2="538" stroke="#5A5A5A" stroke-dasharray="1 1"/><line x1="528" y1="537.5" x2="534" y2="537.5" stroke="#5A5A5A" stroke-dasharray="1 1"/><use href="#htmlR" x="533.4" y="530" width="14" height="14"/><line x1="514.5" y1="544" x2="514.5" y2="558" stroke="#5A5A5A" stroke-dasharray="1 1"/><line x1="515" y1="551.5" x2="521" y2="551.5" stroke="#5A5A5A" stroke-dasharray="1 1"/><use href="#minus" x="510.2" y="547.4" width="9" height="9"/><use href="#folder" x="519.9" y="544" width="14" height="14"/><line x1="514.5" y1="558" x2="514.5" y2="572" stroke="#5A5A5A" stroke-dasharray="1 1"/><line x1="527.5" y1="558" x2="527.5" y2="572" stroke="#5A5A5A" stroke-dasharray="1 1"/><line x1="514.5" y1="572" x2="514.5" y2="586" stroke="#5A5A5A" stroke-dasharray="1 1"/><line x1="527.5" y1="572" x2="527.5" y2="586" stroke="#5A5A5A" stroke-dasharray="1 1"/><line x1="528" y1="579.5" x2="534" y2="579.5" stroke="#5A5A5A" stroke-dasharray="1 1"/><use href="#tplR" x="533.4" y="572" width="14" height="14"/><line x1="514.5" y1="586" x2="514.5" y2="600" stroke="#5A5A5A" stroke-dasharray="1 1"/><line x1="527.5" y1="586" x2="527.5" y2="600" stroke="#5A5A5A" stroke-dasharray="1 1"/><line x1="528" y1="593.5" x2="534" y2="593.5" stroke="#5A5A5A" stroke-dasharray="1 1"/><use href="#tplR" x="533.4" y="586" width="14" height="14"/><line x1="514.5" y1="600" x2="514.5" y2="614" stroke="#5A5A5A" stroke-dasharray="1 1"/><line x1="527.5" y1="600" x2="527.5" y2="614" stroke="#5A5A5A" stroke-dasharray="1 1"/><line x1="528" y1="607.5" x2="534" y2="607.5" stroke="#5A5A5A" stroke-dasharray="1 1"/><use href="#tplR" x="533.4" y="600" width="14" height="14"/><line x1="514.5" y1="614" x2="514.5" y2="628" stroke="#5A5A5A" stroke-dasharray="1 1"/><line x1="527.5" y1="614" x2="527.5" y2="628" stroke="#5A5A5A" stroke-dasharray="1 1"/><line x1="528" y1="621.5" x2="534" y2="621.5" stroke="#5A5A5A" stroke-dasharray="1 1"/><use href="#tplR" x="533.4" y="614" width="14" height="14"/><line x1="514.5" y1="628" x2="514.5" y2="642" stroke="#5A5A5A" stroke-dasharray="1 1"/><line x1="527.5" y1="628" x2="527.5" y2="642" stroke="#5A5A5A" stroke-dasharray="1 1"/><line x1="528" y1="635.5" x2="534" y2="635.5" stroke="#5A5A5A" stroke-dasharray="1 1"/><use href="#tplR" x="533.4" y="628" width="14" height="14"/></svg>
<div class="t" style="left:37.7px;top:139px;font-size:9.5px;color:#000;font-weight:normal;transform:scaleX(0.9);letter-spacing:0.35px;">logs</div>
<div class="t" style="left:51.2px;top:153px;font-size:9.5px;color:#000;font-weight:normal;transform:scaleX(0.9);letter-spacing:0.35px;">football.xml</div>
<div class="t" style="left:51.2px;top:167px;font-size:9.5px;color:#000;font-weight:normal;transform:scaleX(0.9);letter-spacing:0.35px;">hockey.xml</div>
<div class="t" style="left:51.2px;top:181px;font-size:9.5px;color:#000;font-weight:normal;transform:scaleX(0.9);letter-spacing:0.35px;">mixed.xml</div>
<div class="t" style="left:37.7px;top:195px;font-size:9.5px;color:#000;font-weight:normal;transform:scaleX(0.9);letter-spacing:0.35px;">.htaccess</div>
<div class="t" style="left:37.7px;top:209px;font-size:9.5px;color:#000;font-weight:normal;transform:scaleX(0.9);letter-spacing:0.35px;">conf.php</div>
<div class="t" style="left:37.7px;top:223px;font-size:9.5px;color:#000;font-weight:normal;transform:scaleX(0.9);letter-spacing:0.35px;">football.php</div>
<div class="t" style="left:37.7px;top:237px;font-size:9.5px;color:#000;font-weight:normal;transform:scaleX(0.9);letter-spacing:0.35px;">generator.football.europe.php</div>
<div class="t" style="left:37.7px;top:251px;font-size:9.5px;color:#000;font-weight:normal;transform:scaleX(0.9);letter-spacing:0.35px;">generator.hockey.world.php</div>
<div class="t" style="left:37.7px;top:265px;font-size:9.5px;color:#000;font-weight:normal;transform:scaleX(0.9);letter-spacing:0.35px;">generator.main.php</div>
<div class="t" style="left:37.7px;top:279px;font-size:9.5px;color:#000;font-weight:normal;transform:scaleX(0.9);letter-spacing:0.35px;">hockey.php</div>
<div class="t" style="left:37.7px;top:293px;font-size:9.5px;color:#000;font-weight:normal;transform:scaleX(0.9);letter-spacing:0.35px;">index.php</div>
<div class="t" style="left:37.7px;top:307px;font-size:9.5px;color:#000;font-weight:normal;transform:scaleX(0.9);letter-spacing:0.35px;">mixed.php</div>
<div class="t" style="left:24.2px;top:321px;font-size:9.5px;color:#000;font-weight:normal;transform:scaleX(0.9);letter-spacing:0.35px;">img</div>
<div class="t" style="left:24.2px;top:335px;font-size:9.5px;color:#000;font-weight:normal;transform:scaleX(0.9);letter-spacing:0.35px;">inc</div>
<div class="t" style="left:37.7px;top:349px;font-size:9.5px;color:#000;font-weight:normal;transform:scaleX(0.9);letter-spacing:0.35px;">classes</div>
<div class="t" style="left:51.2px;top:363px;font-size:9.5px;color:#000;font-weight:normal;transform:scaleX(0.9);letter-spacing:0.35px;">dbmysql.php</div>
<div style="position:absolute;left:50.2px;top:376px;width:48px;height:13px;background:#0A246A;box-sizing:border-box;border:1px dotted #C8B070;"></div>
<div class="t" style="left:51.2px;top:377px;font-size:9.5px;color:#fff;font-weight:normal;transform:scaleX(0.9);letter-spacing:0.35px;">myblitz.php</div>
<div class="t" style="left:51.2px;top:391px;font-size:9.5px;color:#000;font-weight:normal;transform:scaleX(0.9);letter-spacing:0.35px;">storage.php</div>
<div class="t" style="left:37.7px;top:405px;font-size:9.5px;color:#000;font-weight:normal;transform:scaleX(0.9);letter-spacing:0.35px;">libs</div>
<div class="t" style="left:37.7px;top:419px;font-size:9.5px;color:#000;font-weight:normal;transform:scaleX(0.9);letter-spacing:0.35px;">conf.php</div>
<div class="t" style="left:24.2px;top:433px;font-size:9.5px;color:#000;font-weight:normal;transform:scaleX(0.9);letter-spacing:0.35px;">js</div>
<div class="t" style="left:37.7px;top:447px;font-size:9.5px;color:#000;font-weight:normal;transform:scaleX(0.9);letter-spacing:0.35px;">cookie.js</div>
<div class="t" style="left:37.7px;top:475px;font-size:9.5px;color:#000;font-weight:normal;transform:scaleX(0.9);letter-spacing:0.35px;">marks.js</div>
<div class="t" style="left:37.7px;top:489px;font-size:9.5px;color:#000;font-weight:normal;transform:scaleX(0.9);letter-spacing:0.35px;">openwin.js</div>
<div class="t" style="left:24.2px;top:503px;font-size:9.5px;color:#000;font-weight:normal;transform:scaleX(0.9);letter-spacing:0.35px;">setemplates</div>
<div class="t" style="left:37.7px;top:517px;font-size:9.5px;color:#000;font-weight:normal;transform:scaleX(0.9);letter-spacing:0.35px;">bottom.html</div>
<div class="t" style="left:37.7px;top:531px;font-size:9.5px;color:#000;font-weight:normal;transform:scaleX(0.9);letter-spacing:0.35px;">top.html</div>
<div class="t" style="left:24.2px;top:545px;font-size:9.5px;color:#000;font-weight:normal;transform:scaleX(0.9);letter-spacing:0.35px;">templates</div>
<div class="t" style="left:37.7px;top:559px;font-size:9.5px;color:#000;font-weight:normal;transform:scaleX(0.9);letter-spacing:0.35px;">backup.css_for_main.html</div>
<div class="t" style="left:37.7px;top:573px;font-size:9.5px;color:#000;font-weight:normal;transform:scaleX(0.9);letter-spacing:0.35px;">counters.tpl</div>
<div class="t" style="left:37.7px;top:587px;font-size:9.5px;color:#000;font-weight:normal;transform:scaleX(0.9);letter-spacing:0.35px;">generator.football.europe.2008.tpl</div>
<div class="t" style="left:37.7px;top:601px;font-size:9.5px;color:#000;font-weight:normal;transform:scaleX(0.9);letter-spacing:0.35px;">generator.football.tpl</div>
<div class="t" style="left:37.7px;top:615px;font-size:9.5px;color:#000;font-weight:normal;transform:scaleX(0.9);letter-spacing:0.35px;">generator.hockey.world.tpl</div>
<div class="t" style="left:37.7px;top:629px;font-size:9.5px;color:#000;font-weight:normal;transform:scaleX(0.9);letter-spacing:0.35px;">generator.hockey.world.2008.tpl</div>
<div class="t" style="left:549.1px;top:139px;font-size:9.5px;color:#000;font-weight:normal;transform:scaleX(0.9);letter-spacing:0.35px;">logs</div>
<div class="t" style="left:562.6px;top:153px;font-size:9.5px;color:#000;font-weight:normal;transform:scaleX(0.9);letter-spacing:0.35px;">football.xml</div>
<div class="t" style="left:562.6px;top:167px;font-size:9.5px;color:#000;font-weight:normal;transform:scaleX(0.9);letter-spacing:0.35px;">hockey.xml</div>
<div class="t" style="left:562.6px;top:181px;font-size:9.5px;color:#000;font-weight:normal;transform:scaleX(0.9);letter-spacing:0.35px;">mixed.xml</div>
<div class="t" style="left:549.1px;top:195px;font-size:9.5px;color:#000;font-weight:normal;transform:scaleX(0.9);letter-spacing:0.35px;">.htaccess</div>
<div class="t" style="left:549.1px;top:209px;font-size:9.5px;color:#000;font-weight:normal;transform:scaleX(0.9);letter-spacing:0.35px;">conf.php</div>
<div class="t" style="left:549.1px;top:223px;font-size:9.5px;color:#000;font-weight:normal;transform:scaleX(0.9);letter-spacing:0.35px;">football.php</div>
<div class="t" style="left:549.1px;top:237px;font-size:9.5px;color:#000;font-weight:normal;transform:scaleX(0.9);letter-spacing:0.35px;">generator.football.europe.php</div>
<div class="t" style="left:549.1px;top:251px;font-size:9.5px;color:#000;font-weight:normal;transform:scaleX(0.9);letter-spacing:0.35px;">generator.hockey.world.php</div>
<div class="t" style="left:549.1px;top:265px;font-size:9.5px;color:#000;font-weight:normal;transform:scaleX(0.9);letter-spacing:0.35px;">generator.main.php</div>
<div class="t" style="left:549.1px;top:279px;font-size:9.5px;color:#000;font-weight:normal;transform:scaleX(0.9);letter-spacing:0.35px;">hockey.php</div>
<div class="t" style="left:549.1px;top:293px;font-size:9.5px;color:#000;font-weight:normal;transform:scaleX(0.9);letter-spacing:0.35px;">index.php</div>
<div class="t" style="left:549.1px;top:307px;font-size:9.5px;color:#000;font-weight:normal;transform:scaleX(0.9);letter-spacing:0.35px;">mixed.php</div>
<div class="t" style="left:535.6px;top:321px;font-size:9.5px;color:#000;font-weight:normal;transform:scaleX(0.9);letter-spacing:0.35px;">img</div>
<div class="t" style="left:535.6px;top:335px;font-size:9.5px;color:#000;font-weight:normal;transform:scaleX(0.9);letter-spacing:0.35px;">inc</div>
<div class="t" style="left:549.1px;top:349px;font-size:9.5px;color:#000;font-weight:normal;transform:scaleX(0.9);letter-spacing:0.35px;">classes</div>
<div class="t" style="left:562.6px;top:363px;font-size:9.5px;color:#000;font-weight:normal;transform:scaleX(0.9);letter-spacing:0.35px;">dbmysql.php</div>
<div style="position:absolute;left:561.6px;top:376px;width:48px;height:13px;background:#0A246A;box-sizing:border-box;border:1px dotted #C8B070;"></div>
<div class="t" style="left:562.6px;top:377px;font-size:9.5px;color:#fff;font-weight:normal;transform:scaleX(0.9);letter-spacing:0.35px;">myblitz.php</div>
<div class="t" style="left:562.6px;top:391px;font-size:9.5px;color:#000;font-weight:normal;transform:scaleX(0.9);letter-spacing:0.35px;">storage.php</div>
<div class="t" style="left:549.1px;top:405px;font-size:9.5px;color:#000;font-weight:normal;transform:scaleX(0.9);letter-spacing:0.35px;">libs</div>
<div class="t" style="left:549.1px;top:419px;font-size:9.5px;color:#000;font-weight:normal;transform:scaleX(0.9);letter-spacing:0.35px;">conf.php</div>
<div class="t" style="left:535.6px;top:433px;font-size:9.5px;color:#000;font-weight:normal;transform:scaleX(0.9);letter-spacing:0.35px;">js</div>
<div class="t" style="left:549.1px;top:447px;font-size:9.5px;color:#000;font-weight:normal;transform:scaleX(0.9);letter-spacing:0.35px;">cookie.js</div>
<div class="t" style="left:549.1px;top:461px;font-size:9.5px;color:#000;font-weight:normal;transform:scaleX(0.9);letter-spacing:0.35px;">main.js</div>
<div class="t" style="left:549.1px;top:475px;font-size:9.5px;color:#000;font-weight:normal;transform:scaleX(0.9);letter-spacing:0.35px;">marks.js</div>
<div class="t" style="left:549.1px;top:489px;font-size:9.5px;color:#000;font-weight:normal;transform:scaleX(0.9);letter-spacing:0.35px;">openwin.js</div>
<div class="t" style="left:535.6px;top:503px;font-size:9.5px;color:#000;font-weight:normal;transform:scaleX(0.9);letter-spacing:0.35px;">setemplates</div>
<div class="t" style="left:549.1px;top:517px;font-size:9.5px;color:#000;font-weight:normal;transform:scaleX(0.9);letter-spacing:0.35px;">bottom.html</div>
<div class="t" style="left:549.1px;top:531px;font-size:9.5px;color:#000;font-weight:normal;transform:scaleX(0.9);letter-spacing:0.35px;">top.html</div>
<div class="t" style="left:535.6px;top:545px;font-size:9.5px;color:#000;font-weight:normal;transform:scaleX(0.9);letter-spacing:0.35px;">templates</div>
<div class="t" style="left:549.1px;top:573px;font-size:9.5px;color:#000;font-weight:normal;transform:scaleX(0.9);letter-spacing:0.35px;">counters.tpl</div>
<div class="t" style="left:549.1px;top:587px;font-size:9.5px;color:#000;font-weight:normal;transform:scaleX(0.9);letter-spacing:0.35px;">generator.football.europe.2008.tpl</div>
<div class="t" style="left:549.1px;top:601px;font-size:9.5px;color:#000;font-weight:normal;transform:scaleX(0.9);letter-spacing:0.35px;">generator.football.tpl</div>
<div class="t" style="left:549.1px;top:615px;font-size:9.5px;color:#000;font-weight:normal;transform:scaleX(0.9);letter-spacing:0.35px;">generator.hockey.world.tpl</div>
<div class="t" style="left:549.1px;top:629px;font-size:9.5px;color:#000;font-weight:normal;transform:scaleX(0.9);letter-spacing:0.35px;">generator.hockey.world.2008.tpl</div>
<div class="t" style="left:auto;right:395px;top:153px;font-size:9.5px;font-weight:bold;transform-origin:right top;transform:scaleX(1.12);-webkit-text-stroke:0.2px #000">0</div>
<div class="t" style="left:auto;right:395px;top:167px;font-size:9.5px;font-weight:bold;transform-origin:right top;transform:scaleX(1.12);-webkit-text-stroke:0.2px #000">9</div>
<div class="t" style="left:auto;right:395px;top:181px;font-size:9.5px;font-weight:bold;transform-origin:right top;transform:scaleX(1.12);-webkit-text-stroke:0.2px #000">0</div>
<div class="t" style="left:auto;right:395px;top:195px;font-size:9.5px;font-weight:bold;transform-origin:right top;transform:scaleX(1.12);-webkit-text-stroke:0.2px #000">0</div>
<div class="t" style="left:auto;right:395px;top:209px;font-size:9.5px;font-weight:bold;transform-origin:right top;transform:scaleX(1.12);-webkit-text-stroke:0.2px #000">0</div>
<div class="t" style="left:auto;right:395px;top:223px;font-size:9.5px;font-weight:bold;transform-origin:right top;transform:scaleX(1.12);-webkit-text-stroke:0.2px #000">0</div>
<div class="t" style="left:auto;right:395px;top:237px;font-size:9.5px;font-weight:bold;transform-origin:right top;transform:scaleX(1.12);-webkit-text-stroke:0.2px #000">0</div>
<div class="t" style="left:auto;right:395px;top:251px;font-size:9.5px;font-weight:bold;transform-origin:right top;transform:scaleX(1.12);-webkit-text-stroke:0.2px #000">0</div>
<div class="t" style="left:auto;right:395px;top:265px;font-size:9.5px;font-weight:bold;transform-origin:right top;transform:scaleX(1.12);-webkit-text-stroke:0.2px #000">0</div>
<div class="t" style="left:auto;right:395px;top:279px;font-size:9.5px;font-weight:bold;transform-origin:right top;transform:scaleX(1.12);-webkit-text-stroke:0.2px #000">0</div>
<div class="t" style="left:auto;right:395px;top:293px;font-size:9.5px;font-weight:bold;transform-origin:right top;transform:scaleX(1.12);-webkit-text-stroke:0.2px #000">1</div>
<div class="t" style="left:auto;right:395px;top:307px;font-size:9.5px;font-weight:bold;transform-origin:right top;transform:scaleX(1.12);-webkit-text-stroke:0.2px #000">0</div>
<div class="t" style="left:auto;right:395px;top:363px;font-size:9.5px;font-weight:bold;transform-origin:right top;transform:scaleX(1.12);-webkit-text-stroke:0.2px #000">0</div>
<div class="t" style="left:auto;right:395px;top:377px;font-size:9.5px;font-weight:bold;transform-origin:right top;transform:scaleX(1.12);-webkit-text-stroke:0.2px #000">2</div>
<div class="t" style="left:auto;right:395px;top:391px;font-size:9.5px;font-weight:bold;transform-origin:right top;transform:scaleX(1.12);-webkit-text-stroke:0.2px #000">0</div>
<div class="t" style="left:auto;right:395px;top:419px;font-size:9.5px;font-weight:bold;transform-origin:right top;transform:scaleX(1.12);-webkit-text-stroke:0.2px #000">7</div>
<div class="t" style="left:auto;right:395px;top:447px;font-size:9.5px;font-weight:bold;transform-origin:right top;transform:scaleX(1.12);-webkit-text-stroke:0.2px #000">0</div>
<div class="t" style="left:auto;right:395px;top:475px;font-size:9.5px;font-weight:bold;transform-origin:right top;transform:scaleX(1.12);-webkit-text-stroke:0.2px #000">0</div>
<div class="t" style="left:auto;right:395px;top:489px;font-size:9.5px;font-weight:bold;transform-origin:right top;transform:scaleX(1.12);-webkit-text-stroke:0.2px #000">0</div>
<div class="t" style="left:auto;right:395px;top:517px;font-size:9.5px;font-weight:bold;transform-origin:right top;transform:scaleX(1.12);-webkit-text-stroke:0.2px #000">13</div>
<div class="t" style="left:auto;right:395px;top:531px;font-size:9.5px;font-weight:bold;transform-origin:right top;transform:scaleX(1.12);-webkit-text-stroke:0.2px #000">10</div>
<div class="t" style="left:auto;right:395px;top:573px;font-size:9.5px;font-weight:bold;transform-origin:right top;transform:scaleX(1.12);-webkit-text-stroke:0.2px #000">0</div>
<div class="t" style="left:auto;right:395px;top:587px;font-size:9.5px;font-weight:bold;transform-origin:right top;transform:scaleX(1.12);-webkit-text-stroke:0.2px #000">0</div>
<div class="t" style="left:auto;right:395px;top:601px;font-size:9.5px;font-weight:bold;transform-origin:right top;transform:scaleX(1.12);-webkit-text-stroke:0.2px #000">0</div>
<div class="t" style="left:auto;right:395px;top:615px;font-size:9.5px;font-weight:bold;transform-origin:right top;transform:scaleX(1.12);-webkit-text-stroke:0.2px #000">0</div>
<div class="t" style="left:auto;right:395px;top:629px;font-size:9.5px;font-weight:bold;transform-origin:right top;transform:scaleX(1.12);-webkit-text-stroke:0.2px #000">0</div>
<svg style="position:absolute;left:0;top:0" width="900" height="631" viewBox="0 0 900 631"><path d="M497.6 165.1 L485.3 165.5 L485.3 175.4 L490.8 186.5 L501.1 191.2 L517 191.2 L517.8 181.7 L518.6 177 L502.7 159.5 L500.4 158.3 L492 158.7 L490.8 163.5" fill="none" stroke="#FF0000" stroke-width="2.8" stroke-linejoin="round" stroke-linecap="round"/></svg>
<div style="position:absolute;left:651px;top:383px;width:241px;height:260px;box-sizing:border-box;background:#D6D2CA;border-left:1px solid #F4F2EE;border-top:1px solid #F4F2EE;border-right:1px solid #404040;box-shadow:2px 2px 2px rgba(0,0,0,0.35)"></div>
<div style="position:absolute;left:653px;top:385px;width:20px;height:258px;background:#C2BEB6;"></div>
<div class="t" style="left:679px;top:387px;font-size:9.5px;color:#000;font-weight:normal;transform:scaleX(0.91);"><u>E</u>xplorer</div>
<div style="position:absolute;left:881px;top:390px;width:0;height:0;border-top:4px solid transparent;border-bottom:4px solid transparent;border-left:4px solid #000"></div>
<div style="position:absolute;left:679px;top:406px;width:210px;height:1px;background:#A29E96;"></div>
<div class="t" style="left:679px;top:412px;font-size:9.5px;color:#000;font-weight:normal;transform:scaleX(0.91);"><u>S</u>elect All</div>
<div class="t" style="left:auto;right:27px;top:412px;font-size:9.5px;transform-origin:right top;transform:scaleX(0.97)">Ctrl+A</div>
<div class="t" style="left:679px;top:430px;font-size:9.5px;color:#000;font-weight:normal;transform:scaleX(0.91);">Select <u>C</u>hanged</div>
<div class="t" style="left:auto;right:27px;top:430px;font-size:9.5px;transform-origin:right top;transform:scaleX(0.97)">Ctrl+S</div>
<div class="t" style="left:679px;top:448px;font-size:9.5px;color:#000;font-weight:normal;transform:scaleX(0.91);">Select <u>I</u>nserted</div>
<div class="t" style="left:679px;top:466px;font-size:9.5px;color:#000;font-weight:normal;transform:scaleX(0.91);">Select <u>R</u>emoved</div>
<div class="t" style="left:679px;top:484px;font-size:9.5px;color:#000;font-weight:normal;transform:scaleX(0.91);"><u>D</u>eselect All</div>
<div class="t" style="left:auto;right:27px;top:484px;font-size:9.5px;transform-origin:right top;transform:scaleX(0.97)">Ctrl+T</div>
<div class="t" style="left:679px;top:502px;font-size:9.5px;color:#000;font-weight:normal;transform:scaleX(0.91);">I<u>n</u>vert Selection</div>
<div class="t" style="left:auto;right:27px;top:502px;font-size:9.5px;transform-origin:right top;transform:scaleX(0.97)">Ctrl+I</div>
<div class="t" style="left:679px;top:520px;font-size:9.5px;color:#000;font-weight:normal;transform:scaleX(0.91);">Se<u>l</u>ect...</div>
<div style="position:absolute;left:679px;top:539px;width:210px;height:1px;background:#A29E96;"></div>
<div class="t" style="left:679px;top:545px;font-size:9.5px;color:#000;font-weight:normal;transform:scaleX(0.91);">Launch <u>F</u>ile Comparisons For Selection</div>
<div class="t" style="left:auto;right:27px;top:545px;font-size:9.5px;transform-origin:right top;transform:scaleX(0.97)">Ctrl+M</div>
<div class="t" style="left:679px;top:563px;font-size:9.5px;color:#000;font-weight:normal;transform:scaleX(0.91);">Re-<u>t</u>est Selected</div>
<div class="t" style="left:auto;right:27px;top:563px;font-size:9.5px;transform-origin:right top;transform:scaleX(0.97)">Ctrl+R</div>
<div class="t" style="left:679px;top:581px;font-size:9.5px;color:#000;font-weight:normal;transform:scaleX(0.91);"><u>H</u>ide/Reveal Selected Items</div>
<div class="t" style="left:auto;right:27px;top:581px;font-size:9.5px;transform-origin:right top;transform:scaleX(0.97)">Ctrl+H</div>
<div style="position:absolute;left:679px;top:600px;width:210px;height:1px;background:#A29E96;"></div>
<div style="position:absolute;left:654px;top:604px;width:235px;height:18px;background:#BFC6DC;box-sizing:border-box;border:1px solid #24469A;"></div>
<div class="t" style="left:679px;top:606px;font-size:9.5px;color:#000;font-weight:normal;transform:scaleX(0.91);">C<u>o</u>py Selected From Second to First...</div>
<div class="t" style="left:auto;right:27px;top:606px;font-size:9.5px;transform-origin:right top;transform:scaleX(0.97)">Ctrl+Q</div>
<div class="t" style="left:679px;top:624px;font-size:9.5px;color:#000;font-weight:normal;transform:scaleX(0.91);">Copy Selected Paths to Clipboard</div>
<svg style="position:absolute;left:0;top:0" width="900" height="631" viewBox="0 0 900 631"><g transform="translate(657 431.5) scale(0.8)"><rect x="1.9" y="0.2" width="4.4" height="3.6" rx="1" fill="#FAFAF4" stroke="#3A3A3A" stroke-width="0.9"/><rect x="10.0" y="0.2" width="4.4" height="3.6" rx="1" fill="#FAFAF4" stroke="#3A3A3A" stroke-width="0.9"/><path d="M1.8 5 H16 L14.2 8.8 H0 Z" fill="#3A7CF8"/><path d="M0 8.3 H14.4" stroke="#1428D8" stroke-width="1"/><rect x="2.6" y="5.5" width="3.4" height="2.6" rx="1" fill="#FAFAF4" stroke="#3A3A3A" stroke-width="0.9"/><rect x="10.7" y="5.5" width="3.4" height="2.6" rx="1" fill="#FAFAF4" stroke="#3A3A3A" stroke-width="0.9"/><path d="M1.8 10 H16 L14.2 13.8 H0 Z" fill="#3A7CF8"/><path d="M0 13.3 H14.4" stroke="#1428D8" stroke-width="1"/><rect x="2.6" y="10.5" width="3.4" height="2.6" rx="1" fill="#FAFAF4" stroke="#3A3A3A" stroke-width="0.9"/><rect x="10.7" y="10.5" width="3.4" height="2.6" rx="1" fill="#FAFAF4" stroke="#3A3A3A" stroke-width="0.9"/></g><g transform="translate(657 520.5) scale(0.8)"><rect x="1.9" y="3.2" width="4.4" height="3.6" rx="1" fill="#FAFAF4" stroke="#3A3A3A" stroke-width="0.9"/><path d="M1.8 8 H16 L14.2 11.8 H0 Z" fill="#3A7CF8"/><path d="M0 11.3 H14.4" stroke="#1428D8" stroke-width="1"/><rect x="2.6" y="8.5" width="3.4" height="2.6" rx="1" fill="#FAFAF4" stroke="#3A3A3A" stroke-width="0.9"/><rect x="10.7" y="8.5" width="3.4" height="2.6" rx="1" fill="#FAFAF4" stroke="#3A3A3A" stroke-width="0.9"/><path d="M1.8 13 H16 L14.2 16.8 H0 Z" fill="#3A7CF8"/><path d="M0 16.3 H14.4" stroke="#1428D8" stroke-width="1"/><rect x="2.6" y="13.5" width="3.4" height="2.6" rx="1" fill="#FAFAF4" stroke="#3A3A3A" stroke-width="0.9"/><rect x="10.7" y="13.5" width="3.4" height="2.6" rx="1" fill="#FAFAF4" stroke="#3A3A3A" stroke-width="0.9"/><rect x="6" y="1" width="10" height="7" fill="#fff" stroke="#333" stroke-width="0.8"/><rect x="6" y="1" width="10" height="2" fill="#2A4CF0"/></g><g transform="translate(657 545.5) scale(0.8)"><rect x="1.9" y="2.2" width="4.4" height="3.6" rx="1" fill="#FAFAF4" stroke="#3A3A3A" stroke-width="0.9"/><path d="M1.8 7 H16 L14.2 10.8 H0 Z" fill="#3A7CF8"/><path d="M0 10.3 H14.4" stroke="#1428D8" stroke-width="1"/><rect x="2.6" y="7.5" width="3.4" height="2.6" rx="1" fill="#FAFAF4" stroke="#3A3A3A" stroke-width="0.9"/><path d="M1.8 12 H16 L14.2 15.8 H0 Z" fill="#3A7CF8"/><path d="M0 15.3 H14.4" stroke="#1428D8" stroke-width="1"/><rect x="2.6" y="12.5" width="3.4" height="2.6" rx="1" fill="#FAFAF4" stroke="#3A3A3A" stroke-width="0.9"/><rect x="10.7" y="12.5" width="3.4" height="2.6" rx="1" fill="#FAFAF4" stroke="#3A3A3A" stroke-width="0.9"/><path d="M8.5 1.5 H12 L14.5 4 V12 H8.5 Z" fill="#FFE060" stroke="#444" stroke-width="0.8"/></g><g transform="translate(657 563.5) scale(0.8)"><rect x="2" y="2" width="3" height="3" fill="#ddd" stroke="#666" stroke-width="0.6"/><rect x="2" y="7" width="3" height="3" fill="#ddd" stroke="#666" stroke-width="0.6"/><rect x="2" y="12" width="3" height="3" fill="#ddd" stroke="#666" stroke-width="0.6"/><rect x="8" y="12" width="3" height="3" fill="#ddd" stroke="#666" stroke-width="0.6"/><rect x="7.5" y="1.5" width="7" height="9" fill="#fff" stroke="#666" stroke-width="0.8"/><path d="M9 4.5 C 9.5 3, 12.5 2.5, 13 4.5 M13 7.5 C 12.5 9, 9.5 9, 9 7.5" stroke="#20B040" stroke-width="1.3" fill="none"/></g><g transform="translate(657 581.5) scale(0.8)"><path d="M1.5 0.5 H10 L13.5 4 V15.5 H1.5 Z" fill="#FFFDE8" stroke="#A8A8A8"/><path d="M1.5 15.5 L13.5 8 V15.5 Z" fill="#E8E0B0"/><path d="M10 0.5 V4 H13.5" fill="#fff" stroke="#A8A8A8"/></g><g transform="translate(656 605.5) scale(0.9)"><rect x="7" y="1.5" width="8" height="7.5" fill="#F2C440" stroke="#8A6A10" stroke-width="0.8"/><path d="M4.5 7.5 H11 L13 9.5 V16 H4.5 Z" fill="#FFFDE8" stroke="#333"/><path d="M11 11 H4 V9.2 L0.5 11.7 L4 14.2 V12.4 H11 Z" fill="#48B0F8" stroke="#1A68B0" stroke-width="0.6"/></g></svg>
</body></html>
